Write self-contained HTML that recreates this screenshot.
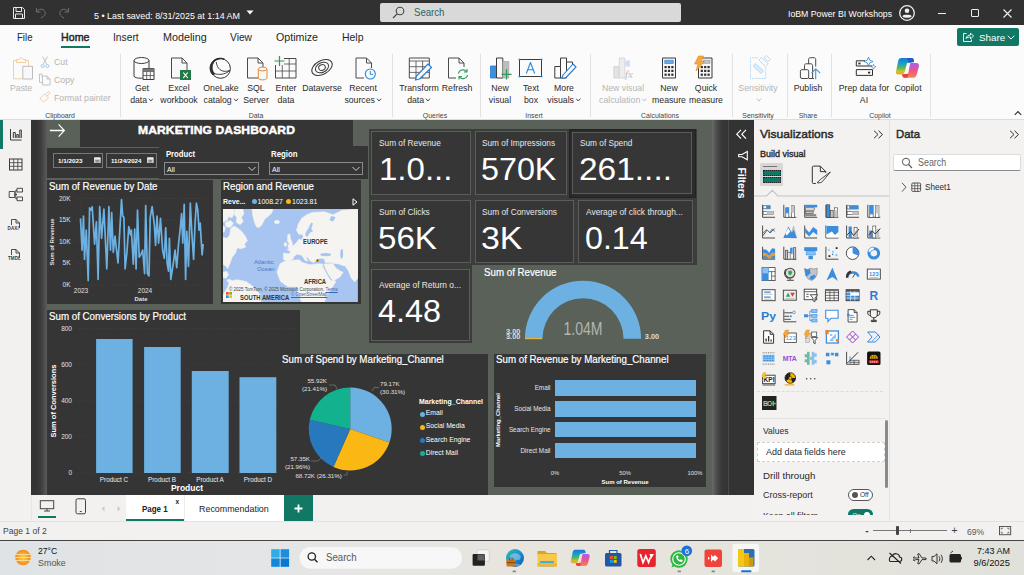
<!DOCTYPE html>
<html><head><meta charset="utf-8">
<style>
*{box-sizing:border-box;margin:0;padding:0}
html,body{width:1024px;height:575px;overflow:hidden;background:#fff;font-family:"Liberation Sans",sans-serif;}
.a{position:absolute}
.t{position:absolute;white-space:nowrap;line-height:1}
.w{color:#fff}
.dk{position:absolute;background:#353535}
.card{position:absolute;background:#363636;border:1px solid #5c5c5c}
.cl{position:absolute;white-space:nowrap;line-height:1;color:#e8e8e8;font-size:9px}
.cv{position:absolute;white-space:nowrap;line-height:1;color:#fff;font-size:31.5px}
.ax{position:absolute;white-space:nowrap;line-height:1;color:#e0e0e0;font-size:6.5px}
.ttl{position:absolute;white-space:nowrap;line-height:1;color:#fff;font-size:10.5px;-webkit-text-stroke:0.2px #fff}
.sg{transform:scaleX(.89);transform-origin:left center}
.sg.c{transform-origin:center center}
.sg.r{transform-origin:right center}
.r{text-align:right}
.c{text-align:center}
.b{font-weight:bold}
</style></head><body>
<!-- canvas surround -->
<div class="a" style="left:31px;top:120px;width:722px;height:375px;background:#333"></div>
<div class="a" style="left:31px;top:120px;width:16px;height:375px;background:linear-gradient(90deg,#333 0,#343434 35%,#3c3c3c 60%,#4b4b4b 80%,#5c5c5c 100%)"></div>
<div class="a" style="left:712px;top:120px;width:17px;height:375px;background:linear-gradient(90deg,#6a6a6a 0,#5e5e5e 12%,#484848 32%,#383838 58%,#333 100%)"></div>
<div class="a" style="left:728px;top:120px;width:1px;height:375px;background:#4a4a4a"></div>
<div class="a" style="left:47px;top:120px;width:665px;height:375px;background:#5a6158"></div>
<!-- title -->
<div class="dk" style="left:80px;top:120px;width:273px;height:27px"></div>
<div class="t w b c" style="transform:scaleX(1.050);transform-origin:center center;left:80px;top:125px;width:273px;font-size:11.5px;letter-spacing:0.1px;-webkit-text-stroke:0.45px #fff">MARKETING DASHBOARD</div>
<svg class="a" style="left:49px;top:123px" width="17.5" height="15" viewBox="0 0 20 16" preserveAspectRatio="none"><path d="M1 8H17M11 1.5L17.5 8L11 14.5" fill="none" stroke="#fff" stroke-width="1.4"/></svg>
<!-- date slicer row -->
<div class="dk" style="left:47px;top:148px;width:321px;height:30px"></div>
<div class="dk" style="left:159px;top:146px;width:209px;height:33px"></div>
<div class="a" style="left:53px;top:153px;width:50px;height:15px;border:1px solid #777"></div>
<div class="a" style="left:106px;top:153px;width:51px;height:15px;border:1px solid #777"></div>
<div class="t w b" style="transform:scaleX(1.021);transform-origin:left center;left:58px;top:157.8px;font-size:6.2px">1/1/2023</div>
<div class="t w b" style="transform:scaleX(0.995);transform-origin:left center;left:110.8px;top:157.8px;font-size:6.2px">11/24/2024</div>
<svg class="a" style="left:94.3px;top:156.5px" width="6.6" height="6.8" viewBox="0 0 8 8"><rect x="0.5" y="1" width="7" height="6.5" fill="#bbb" stroke="#ddd"/><rect x="0.5" y="0.5" width="7" height="2.2" fill="#eee"/><path d="M2 4.2H6M2 5.8H6" stroke="#666" stroke-width="0.8"/></svg>
<svg class="a" style="left:147.3px;top:156.5px" width="6.6" height="6.8" viewBox="0 0 8 8"><rect x="0.5" y="1" width="7" height="6.5" fill="#bbb" stroke="#ddd"/><rect x="0.5" y="0.5" width="7" height="2.2" fill="#eee"/><path d="M2 4.2H6M2 5.8H6" stroke="#666" stroke-width="0.8"/></svg>
<div class="t w b" style="transform:scaleX(0.903);transform-origin:left center;left:166px;top:150px;font-size:8.5px">Product</div>
<div class="t w b" style="transform:scaleX(0.920);transform-origin:left center;left:271px;top:150px;font-size:8.5px">Region</div>
<div class="a" style="left:164px;top:162px;width:95px;height:13px;border:1px solid #8a8a8a"></div>
<div class="a" style="left:269px;top:162px;width:94px;height:13px;border:1px solid #8a8a8a"></div>
<div class="t w" style="left:167px;top:165.5px;font-size:7px">All</div>
<div class="t w" style="left:272px;top:165.5px;font-size:7px">All</div>
<svg class="a" style="left:248px;top:166px" width="8" height="6" viewBox="0 0 8 6"><path d="M0.5 1L4 4.5L7.5 1" fill="none" stroke="#ddd" stroke-width="0.9"/></svg>
<svg class="a" style="left:352px;top:166px" width="8" height="6" viewBox="0 0 8 6"><path d="M0.5 1L4 4.5L7.5 1" fill="none" stroke="#ddd" stroke-width="0.9"/></svg>
<!-- line chart panel -->
<div class="dk" style="left:47px;top:180px;width:166px;height:124px"></div>
<div class="ttl" style="transform:scaleX(0.925);transform-origin:left center;left:49px;top:180.8px">Sum of Revenue by Date</div>
<div class="ax r" style="left:50px;width:20.5px;top:195.5px">20K</div>
<div class="ax r" style="left:50px;width:20.5px;top:217px">15K</div>
<div class="ax r" style="left:50px;width:20.5px;top:238.5px">10K</div>
<div class="ax r" style="left:50px;width:20.5px;top:260px">5K</div>
<div class="ax r" style="left:50px;width:20.5px;top:282px">0K</div>
<div class="ax c" style="left:71px;width:20px;top:288px">2023</div>
<div class="ax c" style="left:135px;width:20px;top:288px">2024</div>
<div class="ax c b" style="left:131px;width:20px;top:295.5px;font-size:6px">Date</div>
<div class="ax b" style="left:52px;top:242px;font-size:6px;transform:translate(-50%,-50%) rotate(-90deg);transform-origin:center;">Sum of Revenue</div>
<!-- map panel -->
<div class="dk" style="left:221px;top:180px;width:140px;height:124px"></div>
<div class="ttl" style="transform:scaleX(0.922);transform-origin:left center;left:223px;top:180.8px">Region and Revenue</div>
<div class="t w b" style="left:223px;top:198px;font-size:7px">Reve...</div>
<div class="a" style="left:251.5px;top:199px;width:5px;height:5px;border-radius:3px;background:#6cb1e1"></div>
<div class="t w" style="left:257.5px;top:198px;font-size:7px">1008.27</div>
<div class="a" style="left:286px;top:199px;width:5px;height:5px;border-radius:3px;background:#fbb714"></div>
<div class="t w" style="left:292px;top:198px;font-size:7px">1023.81</div>
<svg class="a" style="left:352px;top:198px" width="6" height="8" viewBox="0 0 6 8"><path d="M1 0.8L5 4L1 7.2Z" fill="none" stroke="#fff" stroke-width="1"/></svg>
<svg class="a" style="left:223.1px;top:208.8px" width="134.9" height="93.3" viewBox="18 22 775 536" preserveAspectRatio="none">
<rect x="18" y="22" width="775" height="536" fill="#a7c5f0"/>
<g fill="#f5f4f0" stroke="#f5f4f0" stroke-width="3" stroke-linejoin="round">
<!-- arctic canada -->
<path d="M18 22H78L82 48L70 72L50 66L42 88L18 95Z"/>
<path d="M84 24L132 22L138 50L124 70L134 95L116 112L94 98L98 72L84 56Z"/>
<path d="M30 100L62 88L78 105L60 128L35 124Z"/><path d="M18 120L30 125L28 150L18 155Z"/>
<!-- quebec/labrador + US -->
<path d="M62 135L80 120L100 130L125 150L150 185L158 205L140 225L150 240L120 250L100 245L90 275L70 300L60 330L45 365L35 350L18 340V185L40 190L55 175Z"/>
<path d="M18 385L40 380L50 400L35 420L18 415Z"/>
<path d="M40 430L60 425L70 440L50 445Z"/>
<!-- greenland -->
<path d="M185 22H305L298 45L280 62L258 80L240 115L222 130L208 122L198 95L188 55Z"/>
<ellipse cx="328" cy="97" rx="15" ry="10"/>
<!-- UK/Ireland -->
<path d="M390 170L402 165L405 190L415 215L420 240L398 250L390 238L398 222L388 205Z"/>
<ellipse cx="377" cy="225" rx="8" ry="11"/>
<!-- Eurasia -->
<path d="M470 75L500 55L530 42L600 38L650 55L700 30L793 22V420L775 440L755 420L740 380L720 350L700 345L690 340L660 335L640 330L605 330L600 308L575 305L555 312L540 330L520 322L505 300L495 298L505 322L490 318L470 288L445 282L425 295L420 310L390 322L365 312L366 275L398 280L405 265L385 255L410 245L440 215L455 195L470 200L480 180L470 165L455 168L440 145L450 110Z"/>
<!-- Africa -->
<path d="M345 337L372 322L420 316L455 314L475 330L520 342L560 336L590 338L612 385L640 432L668 438L640 480L615 520L600 558H470L448 505L442 468L390 468L348 438L328 385Z"/>
<!-- Arabia -->
<path d="M598 338L650 335L668 362L708 385L690 412L648 438L625 405L605 365Z"/>
<!-- South America -->
<path d="M58 435L100 428L150 438L192 468L232 515L235 558H18V515L45 470Z"/>
</g>
<g fill="#a7c5f0">
<ellipse cx="608" cy="284" rx="32" ry="9"/>
<ellipse cx="700" cy="280" rx="8" ry="28"/>
<path d="M492 160L510 130L525 100L535 105L525 135L535 150L515 160L505 180L492 178Z"/>
<path d="M640 62L665 70L650 95L630 85Z"/>
<path d="M592 345L618 395L642 432" fill="none" stroke="#a7c5f0" stroke-width="6"/><path d="M658 342L682 362L700 378" fill="none" stroke="#a7c5f0" stroke-width="9"/>
</g>
</svg>
<div class="t b" style="left:302.5px;top:239px;font-size:6.5px;color:#333;transform:scaleX(0.9);transform-origin:left">EUROPE</div>
<div class="t b" style="left:304px;top:278.5px;font-size:6.5px;color:#333;transform:scaleX(0.9);transform-origin:left">AFRICA</div>
<div class="t b" style="left:240px;top:295px;font-size:6.5px;color:#333;transform:scaleX(0.9);transform-origin:left">SOUTH AMERICA</div>
<div class="t" style="left:254px;top:259px;font-size:6px;color:#4a78c0">Atlantic</div>
<div class="t" style="left:257px;top:266px;font-size:6px;color:#4a78c0">Ocean</div>
<div class="t" style="left:229px;top:288px;font-size:4.5px;color:#444">© 2025 TomTom, © 2025 Microsoft Corporation, <span style="color:#3a66b0;text-decoration:underline">Terms</span></div>
<div class="t" style="left:291px;top:293px;font-size:4.5px;color:#3a66b0;text-decoration:underline">© OpenStreetMap</div>
<div class="a" style="left:316px;top:258.5px;width:3px;height:3px;border-radius:2px;background:#333;border:0.7px solid #c9a020"></div>
<svg class="a" style="left:225.5px;top:292px" width="6" height="6" viewBox="0 0 6 6"><rect width="2.7" height="2.7" fill="#f25022"/><rect x="3.3" width="2.7" height="2.7" fill="#7fba00"/><rect y="3.3" width="2.7" height="2.7" fill="#00a4ef"/><rect x="3.3" y="3.3" width="2.7" height="2.7" fill="#ffb900"/></svg>

<!-- cards -->
<div class="a" style="left:369px;top:129px;width:328px;height:136px;background:#3b3d3b"></div>
<div class="a" style="left:369px;top:265px;width:103px;height:78px;background:#3b3d3b"></div>
<div class="card" style="left:371px;top:131px;width:100px;height:64px"></div>
<div class="card" style="left:475px;top:131px;width:92px;height:64px"></div>
<div class="a" style="left:569px;top:129px;width:127px;height:69px;background:#2b2b2b;border:1px solid #222"></div>
<div class="card" style="left:572px;top:132px;width:120px;height:62px"></div>
<div class="card" style="left:371px;top:200px;width:100px;height:63px"></div>
<div class="card" style="left:475px;top:200px;width:99px;height:63px"></div>
<div class="card" style="left:578px;top:200px;width:115px;height:63px"></div>
<div class="card" style="left:371px;top:269px;width:99px;height:72px"></div>
<div class="cl" style="transform:scaleX(0.922);transform-origin:left center;left:378.5px;top:139px">Sum of Revenue</div>
<div class="cl" style="transform:scaleX(0.918);transform-origin:left center;left:482px;top:139px">Sum of Impressions</div>
<div class="cl" style="transform:scaleX(0.919);transform-origin:left center;left:579.5px;top:139px">Sum of Spend</div>
<div class="cl" style="transform:scaleX(0.923);transform-origin:left center;left:378.5px;top:208px">Sum of Clicks</div>
<div class="cl" style="transform:scaleX(0.925);transform-origin:left center;left:482px;top:208px">Sum of Conversions</div>
<div class="cl" style="transform:scaleX(0.932);transform-origin:left center;left:585.5px;top:208px">Average of click through...</div>
<div class="cl" style="transform:scaleX(0.933);transform-origin:left center;left:378.5px;top:280.5px">Average of Return o...</div>
<div class="cv" style="transform:scaleX(1.048);transform-origin:left center;left:378.5px;top:154px">1.0...</div>
<div class="cv" style="transform:scaleX(1.025);transform-origin:left center;left:481px;top:154px">570K</div>
<div class="cv" style="transform:scaleX(1.062);transform-origin:left center;left:578.5px;top:154px">261....</div>
<div class="cv" style="transform:scaleX(1.052);transform-origin:left center;left:377.5px;top:223px">56K</div>
<div class="cv" style="transform:scaleX(1.074);transform-origin:left center;left:481px;top:223px">3K</div>
<div class="cv" style="transform:scaleX(1.023);transform-origin:left center;left:584.5px;top:223px">0.14</div>
<div class="cv" style="transform:scaleX(1.028);transform-origin:left center;left:377.5px;top:296px">4.48</div>
<!-- gauge -->
<div class="ttl" style="transform:scaleX(0.927);transform-origin:left center;left:484px;top:267px">Sum of Revenue</div>
<svg class="a" style="left:500px;top:275px" width="180" height="70" viewBox="500 275 180 70">
<path d="M524.9 338.7A58.1 58.1 0 0 1 641.1 338.7L623.5 338.7A40.5 40.5 0 0 0 542.5 338.7Z" fill="#6cb1e1"/>
<rect x="525" y="338" width="17" height="1.2" fill="#e8b33a"/>
</svg>
<div class="t c" style="left:553px;width:60px;top:320px;font-size:18px;color:#b4b4b4;transform:scaleX(0.78)">1.04M</div>
<div class="ax b" style="left:506px;top:328px;font-size:7.4px;color:#ddd">3.00</div>
<div class="ax b" style="left:506px;top:332.8px;font-size:7.4px;color:#ddd">3.00</div>
<div class="ax b" style="left:644.8px;top:332.8px;font-size:7.4px;color:#ddd">3.00</div>
<!-- conversions by product -->
<div class="dk" style="left:47px;top:310px;width:253px;height:185px"></div>
<div class="ttl" style="transform:scaleX(0.928);transform-origin:left center;left:49px;top:311px">Sum of Conversions by Product</div>
<div class="ax r" style="left:50px;width:22px;top:325.5px">800</div>
<div class="ax r" style="left:50px;width:22px;top:361.5px">600</div>
<div class="ax r" style="left:50px;width:22px;top:398px">400</div>
<div class="ax r" style="left:50px;width:22px;top:433.5px">200</div>
<div class="ax r" style="left:50px;width:22px;top:470px">0</div>
<div class="ax b" style="left:53.5px;top:401px;font-size:7.5px;color:#fff;transform:translate(-50%,-50%) rotate(-90deg)">Sum of Conversions</div>
<div class="ax c" style="left:94px;width:40px;top:476.5px;font-size:6.4px;color:#eee">Product C</div>
<div class="ax c" style="left:142px;width:40px;top:476.5px;font-size:6.4px;color:#eee">Product B</div>
<div class="ax c" style="left:190px;width:40px;top:476.5px;font-size:6.4px;color:#eee">Product A</div>
<div class="ax c" style="left:238px;width:40px;top:476.5px;font-size:6.4px;color:#eee">Product D</div>
<div class="ax c b" style="left:157px;width:60px;top:483.5px;font-size:8.5px;color:#fff">Product</div>
<svg class="a" style="left:0;top:0" width="1024" height="575" viewBox="0 0 1024 575">
<line x1="76" x2="206" y1="198.5" y2="198.5" stroke="#4a4a4a" stroke-width="0.6" stroke-dasharray="1 2"/>
<line x1="76" x2="206" y1="220.0" y2="220.0" stroke="#4a4a4a" stroke-width="0.6" stroke-dasharray="1 2"/>
<line x1="76" x2="206" y1="241.6" y2="241.6" stroke="#4a4a4a" stroke-width="0.6" stroke-dasharray="1 2"/>
<line x1="76" x2="206" y1="263.0" y2="263.0" stroke="#4a4a4a" stroke-width="0.6" stroke-dasharray="1 2"/>
<line x1="76" x2="206" y1="285.0" y2="285.0" stroke="#4a4a4a" stroke-width="0.6" stroke-dasharray="1 2"/>
<line x1="81.0" x2="81.0" y1="197" y2="286" stroke="#4a4a4a" stroke-width="0.6" stroke-dasharray="1 2"/>
<line x1="145.0" x2="145.0" y1="197" y2="286" stroke="#4a4a4a" stroke-width="0.6" stroke-dasharray="1 2"/>
<polyline points="80.5,218.4 82.1,250.1 83.5,216.1 84.5,259.5 86.3,230.2 88.2,280.6 89.6,207.9 91.0,210.2 92.2,206.7 94.6,244.2 96.4,221.9 98.1,279.5 99.7,206.7 101.6,238.4 103.9,209.0 106.8,268.9 108.9,206.7 110.5,250.1 111.7,212.6 113.3,252.5 115.0,236.0 118.0,263.0 121.5,199.6 122.7,216.1 123.9,217.3 125.1,268.9 126.9,252.5 128.8,226.6 130.5,234.9 131.4,230.2 133.3,264.2 134.7,229.0 136.1,268.9 137.5,210.2 139.2,257.2 140.8,254.8 142.7,250.1 144.6,273.6 145.7,205.5 147.4,273.6 149.0,275.9 150.2,217.3 152.1,206.7 154.4,225.5 155.6,245.4 157.0,216.1 158.6,243.1 160.5,218.4 162.6,250.1 164.3,258.3 165.7,227.8 167.1,263.0 168.5,271.2 169.4,238.4 170.8,279.5 173.2,264.2 175.1,250.1 176.7,267.7 178.4,245.4 180.2,229.0 181.6,213.7 182.8,243.1 184.2,204.3 185.6,279.5 186.8,231.3 188.5,266.5 190.3,203.2 192.0,236.0 193.6,259.5 195.0,224.3 196.4,203.2 197.8,210.2 199.0,230.2 200.2,223.1 202.1,254.8 203.2,244.2" fill="none" stroke="#6cb1e1" stroke-width="1.7" stroke-linejoin="round"/>
<line x1="78" x2="297" y1="328.5" y2="328.5" stroke="#484848" stroke-width="0.6" stroke-dasharray="1 2"/>
<line x1="78" x2="297" y1="364.4" y2="364.4" stroke="#484848" stroke-width="0.6" stroke-dasharray="1 2"/>
<line x1="78" x2="297" y1="400.9" y2="400.9" stroke="#484848" stroke-width="0.6" stroke-dasharray="1 2"/>
<line x1="78" x2="297" y1="436.7" y2="436.7" stroke="#484848" stroke-width="0.6" stroke-dasharray="1 2"/>
<line x1="78" x2="297" y1="473.0" y2="473.0" stroke="#484848" stroke-width="0.6" stroke-dasharray="1 2"/>
<rect x="96.1" y="339.0" width="36.5" height="134.0" fill="#6cb1e1"/>
<rect x="144.1" y="347.0" width="36.6" height="126.0" fill="#6cb1e1"/>
<rect x="191.8" y="371.0" width="36.9" height="102.0" fill="#6cb1e1"/>
<rect x="239.5" y="377.2" width="36.8" height="95.8" fill="#6cb1e1"/>
</svg>
<!-- pie panel -->
<div class="dk" style="left:277px;top:354px;width:211px;height:141px"></div>
<div class="ttl" style="transform:scaleX(0.927);transform-origin:left center;left:281.5px;top:353.7px">Sum of Spend by Marketing_Channel</div>
<svg class="a" style="left:277px;top:354px" width="211" height="141" viewBox="277 354 211 141">
<path d="M350.20 429.00L350.20 387.50A41.50 41.50 0 0 1 389.41 442.59Z" fill="#6cb1e1"/>
<path d="M350.20 429.00L389.41 442.59A41.50 41.50 0 0 1 333.43 466.96Z" fill="#fbb714"/>
<path d="M350.20 429.00L333.43 466.96A41.50 41.50 0 0 1 309.75 419.74Z" fill="#2878bd"/>
<path d="M350.20 429.00L309.75 419.74A41.50 41.50 0 0 1 350.17 387.50Z" fill="#12b28f"/>
<path d="M372 391L374 387.5L379 387.5M337 389L335 385L329 385M322 457L318 461L311 461M347 471.5L347 475L343.5 475" fill="none" stroke="#888" stroke-width="0.6"/>
</svg>
<div class="ax" style="left:380px;top:381px;font-size:6.2px">79.17K</div>
<div class="ax" style="left:380px;top:389px;font-size:6.2px">(30.31%)</div>
<div class="ax r" style="left:287px;width:40px;top:378px;font-size:6.2px">55.92K</div>
<div class="ax r" style="left:287px;width:40px;top:386px;font-size:6.2px">(21.41%)</div>
<div class="ax r" style="left:270px;width:40px;top:456px;font-size:6.2px">57.35K</div>
<div class="ax r" style="left:270px;width:40px;top:464px;font-size:6.2px">(21.96%)</div>
<div class="ax" style="left:295.4px;top:472.5px;font-size:6.2px">68.72K (26.31%)</div>
<div class="ax b" style="transform:scaleX(1.021);transform-origin:left center;left:419px;top:399.3px;font-size:6.8px;color:#fff">Marketing_Channel</div>
<div class="a" style="left:420px;top:411.7px;width:5px;height:5px;border-radius:3px;background:#6cb1e1"></div>
<div class="ax" style="left:425.8px;top:410.3px;font-size:6.8px;color:#fff">Email</div>
<div class="a" style="left:420px;top:424.8px;width:5px;height:5px;border-radius:3px;background:#fbb714"></div>
<div class="ax" style="left:425.8px;top:423.4px;font-size:6.8px;color:#fff">Social Media</div>
<div class="a" style="left:420px;top:437.9px;width:5px;height:5px;border-radius:3px;background:#2878bd"></div>
<div class="ax" style="left:425.8px;top:436.5px;font-size:6.8px;color:#fff">Search Engine</div>
<div class="a" style="left:420px;top:450.9px;width:5px;height:5px;border-radius:3px;background:#12b28f"></div>
<div class="ax" style="left:425.8px;top:449.5px;font-size:6.8px;color:#fff">Direct Mail</div>
<!-- bar panel -->
<div class="dk" style="left:493.5px;top:353.5px;width:212.5px;height:133px"></div>
<div class="ttl" style="transform:scaleX(0.927);transform-origin:left center;left:496px;top:354px">Sum of Revenue by Marketing_Channel</div>
<div class="a" style="left:555px;top:380px;width:140.5px;height:15.7px;background:#6cb1e1"></div>
<div class="a" style="left:555px;top:400.8px;width:140.5px;height:15.9px;background:#6cb1e1"></div>
<div class="a" style="left:555px;top:421.9px;width:140.5px;height:15.6px;background:#6cb1e1"></div>
<div class="a" style="left:555px;top:442.6px;width:140.5px;height:15.7px;background:#6cb1e1"></div>
<div class="ax r" style="left:500px;width:50.5px;top:385px;font-size:6.35px;color:#e6e6e6">Email</div>
<div class="ax r" style="left:500px;width:50.5px;top:405.5px;font-size:6.35px;color:#e6e6e6">Social Media</div>
<div class="ax r" style="left:500px;width:50.5px;top:426.5px;font-size:6.35px;color:#e6e6e6">Search Engine</div>
<div class="ax r" style="left:500px;width:50.5px;top:447.5px;font-size:6.35px;color:#e6e6e6">Direct Mail</div>
<div class="ax c" style="left:545px;width:20px;top:471px;font-size:5.8px">0%</div>
<div class="ax c" style="left:615px;width:20px;top:471px;font-size:5.8px">50%</div>
<div class="ax c" style="left:685px;width:20px;top:471px;font-size:5.8px">100%</div>
<div class="ax c b" style="left:595px;width:60px;top:478.6px;font-size:6px;color:#fff">Sum of Revenue</div>
<div class="ax b" style="left:499px;top:420px;font-size:5.85px;color:#fff;transform:translate(-50%,-50%) rotate(-90deg)">Marketing_Channel</div>
<div class="a" style="left:0;top:0;width:1024px;height:25px;background:#313131"></div>
<div class="a" style="left:0;top:25px;width:1024px;height:95px;background:#fbfbfb"></div>
<div class="a" style="left:0;top:119px;width:1024px;height:1px;background:#dcdcdc"></div>
<svg class="a" style="left:12px;top:6px" width="14" height="14" viewBox="0 0 14 14"><path d="M1.5 1.5H10.5L12.5 3.5V12.5H1.5Z M4 1.5V5.5H9.5V1.5 M3.5 12.5V8H10.5V12.5" fill="none" stroke="#e8e8e8" stroke-width="1"/></svg>
<svg class="a" style="left:35px;top:7px" width="12" height="12" viewBox="0 0 12 12"><path d="M1.5 1V5H5.5 M1.8 4.8C3 2.5 5.5 1.5 8 2.7C10.8 4.3 10.8 7.6 8.5 9.4L6 11" fill="none" stroke="#6e6e6e" stroke-width="1"/></svg>
<svg class="a" style="left:58px;top:7px" width="12" height="12" viewBox="0 0 12 12"><path d="M10.5 1V5H6.5 M10.2 4.8C9 2.5 6.5 1.5 4 2.7C1.2 4.3 1.2 7.6 3.5 9.4L6 11" fill="none" stroke="#6e6e6e" stroke-width="1"/></svg>
<div class="t w" style="transform:scaleX(0.930);transform-origin:left center;left:94px;top:10.5px;font-size:9.6px">5 • Last saved: 8/31/2025 at 1:14 AM</div>
<svg class="a" style="left:246px;top:10px" width="8" height="5" viewBox="0 0 8 5"><path d="M0.5 0.5H7.5L4 4.5Z" fill="#fff"/></svg>
<div class="a" style="left:379.7px;top:3px;width:301px;height:19px;background:#d9d9d9;border-radius:2px"></div>
<svg class="a" style="left:392px;top:6px" width="13" height="13" viewBox="0 0 13 13"><circle cx="8" cy="5" r="3.8" fill="none" stroke="#444" stroke-width="1.1"/><path d="M5.2 7.8L1 12" stroke="#444" stroke-width="1.2"/></svg>
<div class="t" style="transform:scaleX(0.934);transform-origin:left center;left:414px;top:8px;font-size:10.3px;color:#2e655e">Search</div>
<div class="t w" style="transform:scaleX(0.909);transform-origin:left center;left:788px;top:9px;font-size:9.6px">IoBM Power BI Workshops</div>
<svg class="a" style="left:898px;top:4px" width="18" height="18" viewBox="0 0 18 18"><circle cx="9" cy="9" r="7.3" fill="none" stroke="#f0f0f0" stroke-width="1.3"/><circle cx="9" cy="6.8" r="2.3" fill="#f0f0f0"/><path d="M4.3 12.2C5 10.3 13 10.3 13.7 12.2C12.5 14.3 5.5 14.3 4.3 12.2Z" fill="#f0f0f0"/></svg>
<div class="a" style="left:938px;top:13px;width:8px;height:1px;background:#eee"></div>
<div class="a" style="left:971px;top:9px;width:8px;height:8px;border:1px solid #eee;border-radius:1px"></div>
<svg class="a" style="left:1003px;top:9px" width="9" height="9" viewBox="0 0 9 9"><path d="M0.5 0.5L8.5 8.5M8.5 0.5L0.5 8.5" stroke="#eee" stroke-width="1.1"/></svg>
<div class="t" style="transform:scaleX(0.890);transform-origin:left center;left:17px;top:32px;font-size:10.8px;color:#252525">File</div>
<div class="t" style="transform:scaleX(0.989);transform-origin:left center;left:61px;top:32px;font-size:10.8px;color:#252525;-webkit-text-stroke:0.45px #252525">Home</div>
<div class="t" style="transform:scaleX(0.951);transform-origin:left center;left:113px;top:32px;font-size:10.8px;color:#252525">Insert</div>
<div class="t" style="transform:scaleX(0.997);transform-origin:left center;left:163px;top:32px;font-size:10.8px;color:#252525">Modeling</div>
<div class="t" style="transform:scaleX(0.948);transform-origin:left center;left:230px;top:32px;font-size:10.8px;color:#252525">View</div>
<div class="t" style="transform:scaleX(0.986);transform-origin:left center;left:276px;top:32px;font-size:10.8px;color:#252525">Optimize</div>
<div class="t" style="transform:scaleX(0.968);transform-origin:left center;left:342px;top:32px;font-size:10.8px;color:#252525">Help</div>
<div class="a" style="left:61px;top:46px;width:29px;height:2px;background:#117865"></div>
<div class="a" style="left:957px;top:28px;width:62px;height:18px;background:#117865;border-radius:2px"></div>
<svg class="a" style="left:962px;top:31px" width="12" height="12" viewBox="0 0 12 12"><path d="M4.5 2.5H1.5V10.5H9.5V8.5 M4 7.5C4.5 5 6.5 4 8.5 4V2L11.5 5L8.5 8V6C6.8 6 5 6.3 4 7.5Z" fill="none" stroke="#fff" stroke-width="0.9"/></svg>
<div class="t w" style="left:979px;top:32.5px;font-size:9.8px">Share</div>
<svg class="a" style="left:1007px;top:35px" width="8" height="5" viewBox="0 0 8 5"><path d="M0.7 0.7L4 4L7.3 0.7" fill="none" stroke="#fff" stroke-width="1"/></svg>
<div class="a" style="left:120.0px;top:54px;width:1px;height:63px;background:#e2e2e2"></div>
<div class="a" style="left:392.0px;top:54px;width:1px;height:63px;background:#e2e2e2"></div>
<div class="a" style="left:480.0px;top:54px;width:1px;height:63px;background:#e2e2e2"></div>
<div class="a" style="left:590.0px;top:54px;width:1px;height:63px;background:#e2e2e2"></div>
<div class="a" style="left:731.5px;top:54px;width:1px;height:63px;background:#e2e2e2"></div>
<div class="a" style="left:786.5px;top:54px;width:1px;height:63px;background:#e2e2e2"></div>
<div class="a" style="left:830.5px;top:54px;width:1px;height:63px;background:#e2e2e2"></div>
<div class="a" style="left:929.5px;top:54px;width:1px;height:63px;background:#e2e2e2"></div>
<div class="t c sg" style="left:20px;width:80px;top:111.5px;font-size:7.8px;color:#444">Clipboard</div>
<div class="t c sg" style="left:216px;width:80px;top:111.5px;font-size:7.8px;color:#444">Data</div>
<div class="t c sg" style="left:395px;width:80px;top:111.5px;font-size:7.8px;color:#444">Queries</div>
<div class="t c sg" style="left:494px;width:80px;top:111.5px;font-size:7.8px;color:#444">Insert</div>
<div class="t c sg" style="left:620px;width:80px;top:111.5px;font-size:7.8px;color:#444">Calculations</div>
<div class="t c sg" style="left:718px;width:80px;top:111.5px;font-size:7.8px;color:#444">Sensitivity</div>
<div class="t c sg" style="left:768px;width:80px;top:111.5px;font-size:7.8px;color:#444">Share</div>
<div class="t c sg" style="left:840px;width:80px;top:111.5px;font-size:7.8px;color:#444">Copilot</div>
<div class="t c sg" style="left:92.0px;width:100px;top:83.3px;font-size:9.8px;color:#2b2b2b">Get</div>
<div class="t c sg" style="left:92.0px;width:100px;top:95.3px;font-size:9.8px;color:#2b2b2b">data<svg width="6" height="4" viewBox="0 0 6 4" style="margin-left:1.5px;vertical-align:1px"><path d="M0.6 0.6L3 3L5.4 0.6" fill="none" stroke="#2b2b2b" stroke-width="0.9"/></svg></div>
<div class="t c sg" style="left:128.8px;width:100px;top:83.3px;font-size:9.8px;color:#2b2b2b">Excel</div>
<div class="t c sg" style="left:128.8px;width:100px;top:95.3px;font-size:9.8px;color:#2b2b2b">workbook</div>
<div class="t c sg" style="left:170.6px;width:100px;top:83.3px;font-size:9.8px;color:#2b2b2b">OneLake</div>
<div class="t c sg" style="left:170.6px;width:100px;top:95.3px;font-size:9.8px;color:#2b2b2b">catalog<svg width="6" height="4" viewBox="0 0 6 4" style="margin-left:1.5px;vertical-align:1px"><path d="M0.6 0.6L3 3L5.4 0.6" fill="none" stroke="#2b2b2b" stroke-width="0.9"/></svg></div>
<div class="t c sg" style="left:206.0px;width:100px;top:83.3px;font-size:9.8px;color:#2b2b2b">SQL</div>
<div class="t c sg" style="left:206.0px;width:100px;top:95.3px;font-size:9.8px;color:#2b2b2b">Server</div>
<div class="t c sg" style="left:236.0px;width:100px;top:83.3px;font-size:9.8px;color:#2b2b2b">Enter</div>
<div class="t c sg" style="left:236.0px;width:100px;top:95.3px;font-size:9.8px;color:#2b2b2b">data</div>
<div class="t c sg" style="left:271.8px;width:100px;top:83.3px;font-size:9.8px;color:#2b2b2b">Dataverse</div>
<div class="t c sg" style="left:313.4px;width:100px;top:83.3px;font-size:9.8px;color:#2b2b2b">Recent</div>
<div class="t c sg" style="left:313.4px;width:100px;top:95.3px;font-size:9.8px;color:#2b2b2b">sources<svg width="6" height="4" viewBox="0 0 6 4" style="margin-left:1.5px;vertical-align:1px"><path d="M0.6 0.6L3 3L5.4 0.6" fill="none" stroke="#2b2b2b" stroke-width="0.9"/></svg></div>
<div class="t c sg" style="left:369.0px;width:100px;top:83.3px;font-size:9.8px;color:#2b2b2b">Transform</div>
<div class="t c sg" style="left:369.0px;width:100px;top:95.3px;font-size:9.8px;color:#2b2b2b">data<svg width="6" height="4" viewBox="0 0 6 4" style="margin-left:1.5px;vertical-align:1px"><path d="M0.6 0.6L3 3L5.4 0.6" fill="none" stroke="#2b2b2b" stroke-width="0.9"/></svg></div>
<div class="t c sg" style="left:406.6px;width:100px;top:83.3px;font-size:9.8px;color:#2b2b2b">Refresh</div>
<div class="t c sg" style="left:450.4px;width:100px;top:83.3px;font-size:9.8px;color:#2b2b2b">New</div>
<div class="t c sg" style="left:450.4px;width:100px;top:95.3px;font-size:9.8px;color:#2b2b2b">visual</div>
<div class="t c sg" style="left:480.5px;width:100px;top:83.3px;font-size:9.8px;color:#2b2b2b">Text</div>
<div class="t c sg" style="left:480.5px;width:100px;top:95.3px;font-size:9.8px;color:#2b2b2b">box</div>
<div class="t c sg" style="left:513.6px;width:100px;top:83.3px;font-size:9.8px;color:#2b2b2b">More</div>
<div class="t c sg" style="left:513.6px;width:100px;top:95.3px;font-size:9.8px;color:#2b2b2b">visuals<svg width="6" height="4" viewBox="0 0 6 4" style="margin-left:1.5px;vertical-align:1px"><path d="M0.6 0.6L3 3L5.4 0.6" fill="none" stroke="#2b2b2b" stroke-width="0.9"/></svg></div>
<div class="t c sg" style="left:573.4px;width:100px;top:83.3px;font-size:9.8px;color:#b5b5b5">New visual</div>
<div class="t c sg" style="left:573.4px;width:100px;top:95.3px;font-size:9.8px;color:#b5b5b5">calculation<svg width="6" height="4" viewBox="0 0 6 4" style="margin-left:1.5px;vertical-align:1px"><path d="M0.6 0.6L3 3L5.4 0.6" fill="none" stroke="#b5b5b5" stroke-width="0.9"/></svg></div>
<div class="t c sg" style="left:619.2px;width:100px;top:83.3px;font-size:9.8px;color:#2b2b2b">New</div>
<div class="t c sg" style="left:619.2px;width:100px;top:95.3px;font-size:9.8px;color:#2b2b2b">measure</div>
<div class="t c sg" style="left:656.1px;width:100px;top:83.3px;font-size:9.8px;color:#2b2b2b">Quick</div>
<div class="t c sg" style="left:656.1px;width:100px;top:95.3px;font-size:9.8px;color:#2b2b2b">measure</div>
<div class="t c sg" style="left:708.0px;width:100px;top:83.3px;font-size:9.8px;color:#b5b5b5">Sensitivity</div>
<div class="t c sg" style="left:708.0px;width:100px;top:95.3px;font-size:9.8px;color:#b5b5b5"><svg width="6" height="4" viewBox="0 0 6 4" style="margin-left:1.5px;vertical-align:1px"><path d="M0.6 0.6L3 3L5.4 0.6" fill="none" stroke="#b5b5b5" stroke-width="0.9"/></svg></div>
<div class="t c sg" style="left:758.4px;width:100px;top:83.3px;font-size:9.8px;color:#2b2b2b">Publish</div>
<div class="t c sg" style="left:814.4px;width:100px;top:83.3px;font-size:9.8px;color:#2b2b2b">Prep data for</div>
<div class="t c sg" style="left:814.4px;width:100px;top:95.3px;font-size:9.8px;color:#2b2b2b">AI</div>
<div class="t c sg" style="left:858.0px;width:100px;top:83.3px;font-size:9.8px;color:#2b2b2b">Copilot</div>
<div class="t sg" style="left:10px;top:83.3px;font-size:9.8px;color:#b5b5b5">Paste</div>
<div class="t sg" style="left:54px;top:57px;font-size:9.8px;color:#b5b5b5">Cut</div>
<div class="t sg" style="left:54px;top:75px;font-size:9.8px;color:#b5b5b5">Copy</div>
<div class="t sg" style="left:54px;top:93px;font-size:9.8px;color:#b5b5b5">Format painter</div>
<svg class="a" style="left:1013.5px;top:110px" width="8" height="6" viewBox="0 0 8 6"><path d="M0.8 4.8L4 1.5L7.2 4.8" fill="none" stroke="#333" stroke-width="1.2"/></svg>
<svg class="a" style="left:0;top:50px" width="1024" height="70" viewBox="0 50 1024 70" fill="none" stroke-linejoin="round">
<defs>
<linearGradient id="cp1" x1="0" y1="0" x2="1" y2="1"><stop offset="0" stop-color="#2a9df4"/><stop offset="0.35" stop-color="#3fc08c"/><stop offset="0.6" stop-color="#f5c04a"/><stop offset="1" stop-color="#f0603a"/></linearGradient>
<linearGradient id="cp2" x1="0" y1="0" x2="1" y2="1"><stop offset="0" stop-color="#3a6ff0"/><stop offset="0.5" stop-color="#b05ae0"/><stop offset="1" stop-color="#f0508a"/></linearGradient>
<linearGradient id="cpL" x1="0" y1="0" x2="0" y2="1"><stop offset="0" stop-color="#1878d8"/><stop offset="0.35" stop-color="#1aa0c8"/><stop offset="0.6" stop-color="#58b858"/><stop offset="0.8" stop-color="#c8c030"/><stop offset="1" stop-color="#f0a818"/></linearGradient><linearGradient id="cpR" x1="0" y1="0" x2="0" y2="1"><stop offset="0" stop-color="#a860e8"/><stop offset="0.45" stop-color="#e85498"/><stop offset="0.75" stop-color="#f06a6a"/><stop offset="1" stop-color="#e8924a"/></linearGradient></defs>
<!-- paste -->
<path d="M16.5 60.5H13.5V78.8H22.5 M28.5 66V60.5H25.5 M16.5 62.5V59.5H19C19 57.3 23 57.3 23 59.5H25.5V62.5Z" stroke="#f2cfa0" stroke-width="1"/>
<rect x="22.8" y="66.3" width="9.7" height="12.7" stroke="#bdbdbd" stroke-width="1" fill="#f8f8f8"/>
<!-- cut -->
<path d="M42.5 56.5L47 64.5 M47.5 56.5L43 64.5" stroke="#bdbdbd" stroke-width="0.9"/>
<circle cx="42.7" cy="66" r="1.5" stroke="#9cc7ea" stroke-width="0.9"/><circle cx="47.3" cy="66" r="1.5" stroke="#9cc7ea" stroke-width="0.9"/>
<!-- copy -->
<path d="M42 76.5V74H39.5V82.5H42" stroke="#bdbdbd" stroke-width="0.9"/>
<path d="M42.5 76H47L50 79V85H42.5Z M47 76V79H50" stroke="#bdbdbd" stroke-width="0.9"/>
<!-- format painter -->
<path d="M39.8 98.5L44.5 94L48.5 98L43.5 102Z M45.5 94.5L48.5 91.5L50 93L47 96" stroke="#f2cfa0" stroke-width="1"/>
<!-- get data -->
<path d="M134 60.5V76C134 79 148.5 79 149 76 M149 60.5V68" stroke="#3b3b3b" stroke-width="1"/>
<ellipse cx="141.5" cy="60.5" rx="7.5" ry="3" stroke="#3b3b3b" stroke-width="1"/>
<rect x="143" y="68.5" width="11" height="11" fill="#f8f8f8" stroke="#3b3b3b" stroke-width="1"/>
<path d="M143 71.5H154 M143 75.5H154 M146.7 71.5V79.5 M150.3 71.5V79.5" stroke="#3b3b3b" stroke-width="0.7"/>
<rect x="143" y="68.5" width="11" height="3" fill="#777" stroke="none"/>
<!-- excel -->
<path d="M171.5 58H182L187 63V78H171.5Z M182 58V63H187" stroke="#4a4a4a" stroke-width="1" fill="#f8f8f8"/>
<rect x="180" y="70" width="11" height="10" fill="#1e7b45" stroke="none"/>
<path d="M183.3 72.5L187.7 77.8 M187.7 72.5L183.3 77.8" stroke="#fff" stroke-width="1.1"/>
<!-- onelake -->
<circle cx="220.6" cy="68.5" r="9.8" stroke="#2f2f2f" stroke-width="1"/>
<path d="M212.3 74.5A10 10 0 0 1 224.5 59.2A9 9 0 0 0 214.8 74Z" fill="#2f2f2f" stroke="#2f2f2f" stroke-width="1"/>
<path d="M216.2 62C217 68 221 73.5 230 70.5 M212 72.5C217 75.5 225 75 229.8 70.5" stroke="#2f2f2f" stroke-width="0.9"/>
<!-- sql -->
<path d="M247.5 58H258L263 63V78H247.5Z M258 58V63H263" stroke="#4a4a4a" stroke-width="1" fill="#f8f8f8"/>
<path d="M258.3 69V78C258.3 80.5 267 80.5 267 78V69" stroke="#e08a3c" stroke-width="1" fill="#f8f8f8"/>
<ellipse cx="262.65" cy="69" rx="4.35" ry="1.9" stroke="#e08a3c" stroke-width="1" fill="#f8f8f8"/>
<!-- enter data -->
<rect x="275.5" y="58.5" width="20.5" height="19.5" stroke="#4a4a4a" stroke-width="1"/>
<path d="M275.5 64H296 M275.5 71H296 M282.3 58.5V78 M289.2 58.5V78" stroke="#4a4a4a" stroke-width="0.8"/>
<rect x="274" y="56" width="10" height="9" fill="#f8f8f8" stroke="none"/>
<path d="M279.5 56V66 M274.5 61H284.5" stroke="#2f9a5a" stroke-width="1.2"/>
<!-- dataverse -->
<g transform="rotate(-28 322 67.5)" stroke="#3b3b3b">
<ellipse cx="322" cy="67.5" rx="11" ry="6.8" stroke-width="1"/>
<ellipse cx="322" cy="67.5" rx="7" ry="4.8" stroke-width="1"/>
<ellipse cx="322" cy="67.5" rx="3.4" ry="2.8" stroke-width="1"/>
</g>
<!-- recent sources -->
<path d="M356 58H366.5L371.5 63V68 M364 78H356V58 M366.5 58V63H371.5" stroke="#4a4a4a" stroke-width="1"/>
<circle cx="370.3" cy="74" r="5" stroke="#2b88d8" stroke-width="1.1" fill="#f8f8f8"/>
<path d="M370.3 71V74.3H373" stroke="#2b88d8" stroke-width="1"/>
<!-- transform data -->
<rect x="409.3" y="58" width="20" height="20" stroke="#4a4a4a" stroke-width="1"/>
<path d="M409.3 61H429.3 M409.3 66.7H429.3 M409.3 72.4H429.3 M416 61V78 M422.6 61V78" stroke="#4a4a4a" stroke-width="0.8"/>
<path d="M428 64L431.5 67.5L419.5 79L415.5 80L416.5 76Z" fill="#f8f8f8" stroke="#2b7cd3" stroke-width="1.1"/>
<!-- refresh -->
<path d="M448.5 58H459L464 63V67 M456 78H448.5V58 M459 58V63H464" stroke="#4a4a4a" stroke-width="1"/>
<path d="M458.5 73.5C459 70 464 68.5 466.5 71.5 M467 69V72H464 M467.5 75C467 78.5 462 80 459.5 77 M459 79.5V76.5H462" stroke="#2f9a5a" stroke-width="1.1"/>
<!-- new visual -->
<rect x="490.5" y="66" width="6" height="12" fill="#3d8fdc" stroke="#2b7cd3" stroke-width="0.8"/>
<rect x="496.5" y="58" width="6.3" height="20" fill="#f8f8f8" stroke="#3b3b3b" stroke-width="1"/>
<rect x="502.8" y="61.5" width="6" height="16.5" fill="#bdbdbd" stroke="#9a9a9a" stroke-width="0.6"/>
<path d="M506.5 69V79.5 M501.5 74.3H511.5" stroke="#2f9a5a" stroke-width="1.2"/>
<!-- text box -->
<rect x="519.5" y="59.5" width="22" height="17" stroke="#3b3b3b" stroke-width="1"/>
<g fill="#2b88d8" stroke="none"><circle cx="519.5" cy="59.5" r="1.1"/><circle cx="541.5" cy="59.5" r="1.1"/><circle cx="519.5" cy="76.5" r="1.1"/><circle cx="541.5" cy="76.5" r="1.1"/></g>
<path d="M526.3 73.5L530.5 62.5L534.7 73.5 M527.8 69.8H533.2" stroke="#2b88d8" stroke-width="1.1"/>
<!-- more visuals -->
<path d="M554.8 78V66.5H560.5V58H566.5V78Z M560.5 66.5V78 M566.5 62H572.5V66" stroke="#3b3b3b" stroke-width="1"/>
<path d="M573 64L576 67L566 77.5L562 78.5L563 75Z" fill="#f8f8f8" stroke="#2b7cd3" stroke-width="1.1"/>
<!-- new visual calc -->
<rect x="613.8" y="66.5" width="5.5" height="11.5" fill="#e2e2e2" stroke="#cfcfcf" stroke-width="0.7"/>
<rect x="619.3" y="58" width="5.5" height="20" fill="#ededed" stroke="#cfcfcf" stroke-width="0.7"/>
<rect x="625" y="60.5" width="5" height="6" fill="#cfe2f5" stroke="none"/>
<text x="625" y="77.5" font-family="Liberation Serif" font-style="italic" font-size="11" fill="#bdbdbd" stroke="none">fx</text>
<!-- new measure -->
<rect x="662.5" y="58" width="13" height="20" stroke="#3b3b3b" stroke-width="1" fill="#f8f8f8"/>
<rect x="664.7" y="60.3" width="8.6" height="3.2" fill="#6aa9e4" stroke="#2b7cd3" stroke-width="0.6"/>
<g fill="#2f2f2f" stroke="none"><rect x="664.5" y="66" width="2.2" height="2.2"/><rect x="667.9" y="66" width="2.2" height="2.2"/><rect x="671.3" y="66" width="2.2" height="2.2"/><rect x="664.5" y="69.8" width="2.2" height="2.2"/><rect x="667.9" y="69.8" width="2.2" height="2.2"/><rect x="671.3" y="69.8" width="2.2" height="2.2"/><rect x="664.5" y="73.6" width="2.2" height="2.2"/><rect x="667.9" y="73.6" width="2.2" height="2.2"/><rect x="671.3" y="73.6" width="2.2" height="2.2"/></g>
<!-- quick measure -->
<rect x="698.5" y="58" width="13.5" height="20" stroke="#3b3b3b" stroke-width="1" fill="#f8f8f8"/>
<rect x="703" y="60.3" width="7" height="3" fill="#c8c8c8" stroke="#777" stroke-width="0.5"/>
<g fill="#2f2f2f" stroke="none"><rect x="700.7" y="66" width="2.2" height="2.2"/><rect x="704.1" y="66" width="2.2" height="2.2"/><rect x="707.5" y="66" width="2.2" height="2.2"/><rect x="700.7" y="69.8" width="2.2" height="2.2"/><rect x="704.1" y="69.8" width="2.2" height="2.2"/><rect x="707.5" y="69.8" width="2.2" height="2.2"/><rect x="700.7" y="73.6" width="2.2" height="2.2"/><rect x="704.1" y="73.6" width="2.2" height="2.2"/><rect x="707.5" y="73.6" width="2.2" height="2.2"/></g>
<path d="M698.5 56L703.5 56L701 61.5H704.5L696 71L698 64H694.5Z" fill="#f7a83a" stroke="#e08a1e" stroke-width="0.6"/>
<!-- sensitivity -->
<path d="M758 57.8H750.5V78.5H765.7V67" stroke="#a9d3f0" stroke-width="0.9" stroke-dasharray="1.4 0.9"/>
<path d="M753 66L755.5 63.5L763.5 71L761 73.5Z" stroke="#a9d3f0" stroke-width="0.8" fill="#dcecf8"/>
<path d="M759 60L761.5 57.5L768 63.5L765.5 66.5Z" stroke="#a9d3f0" stroke-width="0.8" fill="#fbfbfb"/>
<path d="M764 57.5L766.5 55.5L770.5 59.5L768 61.5Z" stroke="#a9d3f0" stroke-width="0.8" fill="#fbfbfb"/>
<!-- publish -->
<path d="M808.6 64V59.2C808.6 58.3 809.3 57.7 810.2 57.7H814.1C815 57.7 815.7 58.3 815.7 59.2V66.5" stroke="#4a4a4a" stroke-width="1"/>
<path d="M804.5 69.7V65.3C804.5 64.4 805.2 63.8 806.1 63.8H811C811.9 63.8 812.6 64.4 812.6 65.3V78.5" stroke="#4a4a4a" stroke-width="1"/>
<rect x="800.4" y="69.7" width="8.3" height="8.8" rx="1.5" stroke="#4a4a4a" stroke-width="1"/>
<path d="M808.7 78.5H814" stroke="#4a4a4a" stroke-width="1"/>
<path d="M815.7 79.3V69 M811.5 73.2L815.7 68.9L820.2 73.2" stroke="#3a96e0" stroke-width="1.1"/>
<!-- prep data for AI -->
<path d="M865 60.8H856.3V66H872" stroke="#2f2f2f" stroke-width="1"/>
<rect x="856.3" y="69.6" width="16.2" height="5.8" stroke="#2f2f2f" stroke-width="1"/>
<rect x="858.3" y="62.6" width="2.2" height="1.8" fill="#2f2f2f" stroke="none"/><rect x="868" y="71.7" width="2.2" height="1.8" fill="#2f2f2f" stroke="none"/>
<path d="M868.5 57L869.8 60.2L873 61.5L869.8 62.8L868.5 66L867.2 62.8L864 61.5L867.2 60.2Z" stroke="#2b88d8" stroke-width="0.8" fill="#f8f8f8"/>
<path d="M873.5 64.3L874.2 66L876 66.7L874.2 67.4L873.5 69.2L872.8 67.4L871 66.7L872.8 66Z" stroke="#2b88d8" stroke-width="0.6"/>
<!-- copilot -->
<path d="M896 71.5L898.3 60.5C898.8 58.8 899.8 58 901.3 58H911.5C913.2 58 914 59.5 914 62L907 63L904.7 72C904.2 73.6 903 74.5 901.3 74.5H898C896.5 74.5 895.7 73.3 896 71.5Z" fill="url(#cpL)"/>
<path d="M910.5 63H916.5C918.3 63 919.3 64.5 918.9 66.5L916.8 74.5C916.3 76.5 915.2 77.7 913.5 77.7H904.5C903 77.7 902.2 76.5 902.2 74.5L908.2 73.8L909.5 66.5C909.7 65 910 64 910.5 63Z" fill="url(#cpR)"/>
<path d="M902.2 74.3L908.3 73.7L907.5 77.7H904.5C903 77.7 902.2 76.3 902.2 74.3Z" fill="#e8443a"/>
<path d="M907 58H911.5C913.2 58 914 59.5 914 62L909 62.7Z" fill="#2858c8"/>
</svg>

<!-- left rail -->
<div class="a" style="left:0;top:120px;width:31px;height:401px;background:#f2f1f0"></div>
<div class="a" style="left:0;top:120px;width:2.5px;height:29px;background:#117865"></div>
<svg class="a" style="left:0;top:120px" width="31" height="150" viewBox="0 120 31 150" fill="none" stroke="#3a3a3a" stroke-width="1">
<path d="M10.5 129V140H21.5 M13.3 138V132.5H15.3V138 M16.8 138V134.5H18.3V138 M19.8 138V130H21.3V138"/>
<rect x="9.5" y="159" width="12.5" height="11"/><path d="M9.5 162.7H22M9.5 166.3H22M13.7 159V170M17.8 159V170" stroke-width="0.8"/>
<path d="M9.2 191.5H14.7V197.5H9.2Z M17 188.3H22.5V192H17Z M17 197H22.5V200.7H17Z M14.7 194.5H17M15.8 190.2V198.8M15.8 190.2H17M15.8 198.8H17" stroke-width="0.9"/>
<path d="M19.5 228V223L16 219.5H11.5V225 M16 219.5V223H19.5" stroke-width="0.9"/>
<path d="M19.5 258V253L16 249.5H11.5V255 M16 249.5V253H19.5" stroke-width="0.9"/>
</svg>
<div class="t b" style="left:7.5px;top:227px;font-size:4.6px;color:#3a3a3a;letter-spacing:0.1px">DAX/</div>
<div class="t b" style="left:8px;top:257px;font-size:4.6px;color:#3a3a3a">TMDL</div>
<!-- filters pane -->
<div class="a" style="left:729px;top:120px;width:24.5px;height:375px;background:#333"></div>
<svg class="a" style="left:729px;top:120px" width="24" height="60" viewBox="729 120 24 60" fill="none" stroke="#fff">
<path d="M741 129.8L736.8 134.2L741 138.6 M746 129.8L741.8 134.2L746 138.6" stroke-width="1.2"/>
<path d="M747.3 151.5V159.7L742 156.7H738.7V154.5H742Z" stroke-width="1.1"/>
</svg>
<div class="t w b" style="left:741.3px;top:182.6px;font-size:10.3px;transform:translate(-50%,-50%) rotate(90deg);letter-spacing:0px">Filters</div>
<!-- viz pane -->
<div class="a" style="left:753.5px;top:120px;width:135px;height:401px;background:#f3f2f1"></div>
<div class="a" style="left:888.7px;top:120px;width:1px;height:401px;background:#e2e2e2"></div>
<div class="a" style="left:889.5px;top:120px;width:134.5px;height:401px;background:#f3f2f1"></div>
<div class="t" style="transform:scaleX(1.023);transform-origin:left center;left:760.4px;top:129px;font-size:11.8px;color:#2a2a2a;-webkit-text-stroke:0.45px #2a2a2a">Visualizations</div>
<svg class="a" style="left:873px;top:130px" width="11" height="9" viewBox="0 0 11 9"><path d="M1 0.7L5 4.5L1 8.3M5.5 0.7L9.5 4.5L5.5 8.3" fill="none" stroke="#333" stroke-width="1"/></svg>
<div class="t" style="transform:scaleX(0.962);transform-origin:left center;left:760.4px;top:149px;font-size:9.4px;color:#2a2a2a;-webkit-text-stroke:0.4px #2a2a2a">Build visual</div>
<div class="a" style="left:760.4px;top:163px;width:23px;height:23px;background:#d9d7d5;border-radius:1.5px"></div>
<div class="a" style="left:763px;top:165.5px;width:14px;height:1.2px;background:#777"></div>
<div class="a" style="left:763px;top:169.5px;width:18.3px;height:6px;background:#117865;border:0.6px dotted #222"></div>
<div class="a" style="left:763px;top:177.3px;width:18.3px;height:6px;background:#117865;border:0.6px dotted #222"></div>
<svg class="a" style="left:811px;top:164px" width="22" height="22" viewBox="811 164 22 22" fill="none" stroke="#333" stroke-width="1"><path d="M815.8 183.5H813.3C812.7 183.5 812.3 183.1 812.3 182.5V167.1C812.3 166.5 812.7 166.1 813.3 166.1H820.3L825.7 171.6V173 M820.3 166.1V171.6H825.7"/><path d="M830.3 172L823.6 180.2C822.3 182.6 819.5 183.3 817 182.7C819 181.8 819.3 179.8 821.6 178.6Z" fill="#f3f2f1" stroke-width="0.9"/></svg>
<svg class="a" style="left:753.5px;top:189px" width="135" height="9" viewBox="753.5 189 135 9"><path d="M753.5 196H766L771.7 190.4L777.4 196H888.5" fill="none" stroke="#c4c4c4" stroke-width="1.2"/></svg>
<svg class="a" style="left:753px;top:198px" width="136" height="220" viewBox="753 198 136 220">
<g transform="translate(761.6 204.3)"><path d="M1 0.5V13H13.5" stroke="#3b3b3b" stroke-width="0.9" fill="none"/><rect x="1.5" y="1.5" width="7" height="3" fill="#fff" stroke="#3b3b3b" stroke-width="0.6"/><rect x="4.5" y="1.5" width="4" height="3" fill="#3b8ede"/><rect x="1.5" y="7" width="10.5" height="3.3" fill="#fff" stroke="#3b3b3b" stroke-width="0.6"/><rect x="5" y="7" width="7" height="3.3" fill="#c4c4c4"/></g>
<g transform="translate(782.8 204.3)"><path d="M1 0.5V13H13.5" stroke="#3b3b3b" stroke-width="0.9" fill="none"/><rect x="3" y="3.5" width="3" height="9.5" fill="#fff" stroke="#3b3b3b" stroke-width="0.6"/><rect x="3" y="3.5" width="3" height="5.5" fill="#3b8ede"/><rect x="8.5" y="1.5" width="3" height="11.5" fill="#fff" stroke="#3b3b3b" stroke-width="0.6"/><rect x="8.5" y="1.5" width="3" height="7" fill="#c4c4c4"/></g>
<g transform="translate(803.7 204.3)"><path d="M1 0.5V13H13.5" stroke="#3b3b3b" stroke-width="0.9" fill="none"/><rect x="1.5" y="0.5" width="12" height="2.6" fill="#3b8ede"/><rect x="1.5" y="3.6" width="9" height="2.2" fill="#fff" stroke="#3b3b3b" stroke-width="0.6"/><rect x="1.5" y="6.8" width="8" height="2.4" fill="#c4c4c4" stroke="#3b3b3b" stroke-width="0.6"/><rect x="1.5" y="9.8" width="11" height="2.2" fill="#888"/></g>
<g transform="translate(824.9 204.3)"><path d="M1 0.5V13H13.5" stroke="#3b3b3b" stroke-width="0.9" fill="none"/><rect x="1.5" y="0.5" width="3.4" height="12.5" fill="#3b8ede" stroke="#3b3b3b" stroke-width="0.6"/><rect x="5.5" y="6" width="2.8" height="7" fill="#c4c4c4" stroke="#3b3b3b" stroke-width="0.6"/><rect x="9.5" y="3.5" width="3" height="9.5" fill="#fff" stroke="#3b3b3b" stroke-width="0.6"/><rect x="9.5" y="6" width="3" height="7" fill="#c4c4c4"/></g>
<g transform="translate(845.6 204.3)"><path d="M1 0.5V13H13.5" stroke="#3b3b3b" stroke-width="0.9" fill="none"/><rect x="1.5" y="1.5" width="11" height="3.2" fill="#fff" stroke="#3b3b3b" stroke-width="0.6"/><rect x="3.5" y="1.5" width="9" height="3.2" fill="#3b8ede"/><rect x="1.5" y="7.2" width="11" height="3.2" fill="#fff" stroke="#3b3b3b" stroke-width="0.6"/><rect x="6.5" y="7.2" width="6" height="3.2" fill="#c4c4c4"/></g>
<g transform="translate(866.8 204.3)"><path d="M1 0.5V13H13.5" stroke="#3b3b3b" stroke-width="0.9" fill="none"/><rect x="3" y="1" width="3.3" height="12" fill="#fff" stroke="#3b3b3b" stroke-width="0.6"/><rect x="3" y="1" width="3.3" height="9" fill="#3b8ede"/><rect x="8.8" y="1" width="3.3" height="12" fill="#fff" stroke="#3b3b3b" stroke-width="0.6"/><rect x="8.8" y="1" width="3.3" height="8" fill="#c4c4c4"/></g>
<g transform="translate(761.6 225.0)"><path d="M1 0.5V13H13.5" stroke="#3b3b3b" stroke-width="0.9" fill="none"/><path d="M1.5 10.5L5.5 5L8.5 8L13 3.5" stroke="#3b3b3b" stroke-width="0.9" fill="none"/><path d="M1.5 8L5 4.5L8 7.5L10.5 4L13.5 6.5" stroke="#3b8ede" stroke-width="1" fill="none"/></g>
<g transform="translate(782.8 225.0)"><path d="M7 13L10.8 1L13.8 13Z" fill="#c4c4c4" stroke="#999" stroke-width="0.4"/><path d="M0.5 13L5.5 1.5L9 7.5L11 5L14 13Z" fill="#3b8ede"/><path d="M2.5 8.5L5.3 3L7.5 6.5L4 10.5Z" fill="#fff"/></g>
<g transform="translate(803.7 225.0)"><path d="M1 0.5V13H13.5" stroke="#3b3b3b" stroke-width="0.9" fill="none"/><path d="M1.5 3L5.5 7.5L9.5 2L13.5 5V10L9.5 7L5.5 11.5L1.5 7.5Z" fill="#3b8ede"/></g>
<g transform="translate(824.9 225.0)"><path d="M1 0.5V13H13.5" stroke="#3b3b3b" stroke-width="0.9" fill="none"/><rect x="1.5" y="1" width="12" height="11.5" fill="#fff"/><path d="M1.5 1H13.5V7L10 10L7 6.5L1.5 9.5Z" fill="#3b8ede"/></g>
<g transform="translate(845.6 225.0)"><path d="M1 0.5V13H13.5" stroke="#3b3b3b" stroke-width="0.9" fill="none"/><rect x="3" y="1.5" width="3.2" height="11.5" fill="#3b8ede"/><rect x="8.5" y="2.5" width="3" height="10.5" fill="#fff" stroke="#3b3b3b" stroke-width="0.6"/><rect x="8.5" y="6" width="3" height="7" fill="#c4c4c4"/><path d="M1.5 10L5 6.5L8 10.5L13.5 4" stroke="#3b3b3b" stroke-width="1" fill="none"/></g>
<g transform="translate(866.8 225.0)"><path d="M1 0.5V13H13.5" stroke="#3b3b3b" stroke-width="0.9" fill="none"/><rect x="2.5" y="5.5" width="3" height="7.5" fill="#3b8ede"/><rect x="6" y="1" width="3" height="12" fill="#fff" stroke="#3b3b3b" stroke-width="0.6"/><rect x="9.5" y="4" width="3" height="9" fill="#c4c4c4"/><path d="M1.5 10.5L5.5 6L8.5 9L13.5 3.5" stroke="#3b3b3b" stroke-width="1" fill="none"/></g>
<g transform="translate(761.6 246.2)"><path d="M1 0.5V13H13.5" stroke="#3b3b3b" stroke-width="0.9" fill="none"/><path d="M1.5 3L5 3.5L7.5 6.5L10.5 2L13.5 2.5V7L10.5 6.5L7.5 10L5 7.5L1.5 7Z" fill="#3b8ede"/><path d="M1.5 7L5 7.5L7.5 10L10.5 6.5L13.5 7V12.5H1.5Z" fill="#e8962e"/><path d="M1.5 10L4.5 10L7.5 12.5L1.5 12.5Z M13.5 9.5L11 10L8 12.5H13.5Z" fill="#3b8ede"/></g>
<g transform="translate(782.8 246.2)"><path d="M1 0.5V13H13.5" stroke="#3b3b3b" stroke-width="0.9" fill="none"/><rect x="2.5" y="4" width="2.5" height="9" fill="#c4c4c4" stroke="#3b3b3b" stroke-width="0.6"/><rect x="5" y="6" width="2.3" height="7" fill="#fff" stroke="#3b3b3b" stroke-width="0.6"/><rect x="7.3" y="1.5" width="2.5" height="6" fill="#3b8ede"/><rect x="10.5" y="1.5" width="2.5" height="11.5" fill="#c4c4c4" stroke="#3b3b3b" stroke-width="0.6"/></g>
<g transform="translate(803.7 246.2)"><rect x="0.5" y="1" width="13" height="3.8" fill="#3b8ede"/><rect x="2.5" y="5.5" width="9" height="3.2" fill="#8cc0ee" stroke="#3b8ede" stroke-width="0.6"/><rect x="4.8" y="9.5" width="4.4" height="3.5" fill="#3b8ede"/></g>
<g transform="translate(824.9 246.2)"><path d="M1 0.5V13H13.5" stroke="#3b3b3b" stroke-width="0.9" fill="none"/><circle cx="4" cy="3.8" r="1" fill="#8cc0ee"/><circle cx="8" cy="5.5" r="1" fill="#8cc0ee"/><circle cx="11.5" cy="9" r="1.1" fill="#8cc0ee"/><circle cx="7.8" cy="8.2" r="0.8" fill="#3b8ede"/><rect x="10.8" y="1" width="1.8" height="1.8" fill="#222"/><rect x="3.6" y="9" width="1.8" height="1.8" fill="#222"/></g>
<g transform="translate(845.6 246.2)"><circle cx="7" cy="7" r="6.3" fill="#fff" stroke="#3b3b3b" stroke-width="0.9"/><path d="M7 7V0.7A6.3 6.3 0 0 1 12.8 9.5Z" fill="#3b8ede"/></g>
<g transform="translate(866.8 246.2)"><circle cx="7" cy="7" r="4.8" fill="none" stroke="#3b8ede" stroke-width="3"/><path d="M7 2.2A4.8 4.8 0 0 0 2.4 5.6" fill="none" stroke="#fff" stroke-width="2.2"/><path d="M7 0.8A6.2 6.2 0 0 0 1 5.3 M7 3.7A3.3 3.3 0 0 0 3.8 6" fill="none" stroke="#3b8ede" stroke-width="0.6"/></g>
<g transform="translate(761.6 267.1)"><rect x="0.5" y="0.5" width="13" height="13" fill="#fff" stroke="#3b3b3b" stroke-width="0.8"/><rect x="0.5" y="0.5" width="6.5" height="6" fill="#8cc0ee" stroke="#3b8ede" stroke-width="0.6"/><rect x="0.5" y="6.5" width="6.5" height="7" fill="#3b8ede"/><path d="M7 4.5H13.5M10 4.5V13.5M10 9H13.5" stroke="#3b3b3b" stroke-width="0.7" fill="none"/></g>
<g transform="translate(782.8 267.1)"><circle cx="7.3" cy="6" r="4.8" fill="#ddd" stroke="#444" stroke-width="1.1"/><path d="M5.5 4L8.5 3.3L9.5 6L7.5 8.5L5.5 7Z" fill="#2fa84f"/><path d="M3 2C0.5 5 1.5 10 5.5 11.5 M4 13.2H11 M7.3 11V13" stroke="#444" stroke-width="1" fill="none"/></g>
<g transform="translate(803.7 267.1)"><path d="M0.8 1.5L4 2.5L7 1L10 2L13.5 1V7L11.5 11L8 13.5L4.5 12L2 8.5Z" fill="#c4c4c4" stroke="#777" stroke-width="0.5"/><path d="M0.8 1.5L4 2.5L6 1.5L7 6L3 9.5L2 8.5Z" fill="#3b8ede"/><path d="M6.5 9.5L11 7.5L12 9.5L8.5 13L6 12Z" fill="#3b8ede"/></g>
<g transform="translate(824.9 267.1)"><path d="M7.5 0.3L13 13.8L7.5 10L1.5 13.5Z" fill="#3b8ede"/></g>
<g transform="translate(845.6 267.1)"><path d="M1.5 10.5A5.8 5.8 0 0 1 12.8 9.5" fill="none" stroke="#3b8ede" stroke-width="2.4"/><path d="M1.5 10.5A5.8 5.8 0 0 1 5.5 4.6" fill="none" stroke="#333" stroke-width="2.4"/><path d="M7 10.5L9.5 6.8" stroke="#333" stroke-width="0.9"/></g>
<g transform="translate(866.8 267.1)"><rect x="0.5" y="2" width="13" height="10" fill="#fff" stroke="#3b3b3b" stroke-width="0.9"/><text x="7" y="9" font-family="Liberation Sans" font-size="5.8" font-weight="bold" fill="#3b8ede" text-anchor="middle">123</text><path d="M2.5 10.3H11.5" stroke="#3b8ede" stroke-width="0.5"/></g>
<g transform="translate(761.6 288.2)"><rect x="0.5" y="1.5" width="13" height="11" fill="#fff" stroke="#3b3b3b" stroke-width="0.9"/><path d="M2.5 4H9M2.5 9H9" stroke="#3b8ede" stroke-width="1.3"/><path d="M2.5 6H11M2.5 11H11" stroke="#999" stroke-width="0.6"/></g>
<g transform="translate(782.8 288.2)"><rect x="0.5" y="2" width="13" height="10" fill="#eee" stroke="#3b3b3b" stroke-width="0.9"/><path d="M3 8.5L5.3 4.5L7.6 8.5Z" fill="#2fa84f"/><path d="M7.4 4.5H12L9.7 8.5Z" fill="#e03a3a"/><path d="M2.5 10.3H11.5" stroke="#999" stroke-width="0.5"/></g>
<g transform="translate(803.7 288.2)"><rect x="0.5" y="1" width="12.5" height="10.5" fill="#fff" stroke="#3b3b3b" stroke-width="0.9"/><path d="M0.5 3.5H13M2.5 6H5M2.5 8.5H5" stroke="#3b3b3b" stroke-width="0.8"/><path d="M6.5 6.5H14L11.3 9.8V13.5L9.3 12.5V9.8Z" fill="#fff" stroke="#3b3b3b" stroke-width="0.9"/></g>
<g transform="translate(824.9 288.2)"><rect x="0.5" y="1.5" width="13" height="11" fill="#fff" stroke="#3b3b3b" stroke-width="0.9"/><path d="M0.5 4.5H13.5M0.5 7.2H13.5M0.5 9.9H13.5M5 1.5V12.5M9.2 1.5V12.5" stroke="#3b3b3b" stroke-width="0.7"/><rect x="0.5" y="1.5" width="13" height="1.5" fill="#777"/></g>
<g transform="translate(845.6 288.2)"><rect x="0.5" y="1.5" width="13" height="11" fill="#3b8ede" stroke="#3b3b3b" stroke-width="0.9"/><rect x="5" y="4.5" width="8.5" height="2.7" fill="#fff"/><path d="M0.5 4.5H13.5M0.5 7.2H13.5M0.5 9.9H13.5M5 1.5V12.5M9.2 1.5V12.5" stroke="#fff" stroke-width="0.6"/><rect x="0.5" y="1.5" width="13" height="1.5" fill="#555"/></g>
<g transform="translate(866.8 288.2)"><text x="7" y="11.5" font-family="Liberation Sans" font-size="12" font-weight="bold" fill="#2b7cd3" text-anchor="middle">R</text></g>
<g transform="translate(761.6 308.8)"><text x="7" y="11" font-family="Liberation Sans" font-size="11.5" font-weight="bold" fill="#2b7cd3" text-anchor="middle" textLength="15" lengthAdjust="spacingAndGlyphs">Py</text></g>
<g transform="translate(782.8 308.8)"><path d="M1 0.5V13H13.5" stroke="#3b3b3b" stroke-width="0.9" fill="none"/><path d="M1.5 4H10M1.5 7.5H6.5M1.5 10.5H8" stroke="#3b3b3b" stroke-width="0.9"/><circle cx="11.3" cy="3.5" r="1.3" fill="#fff" stroke="#3b8ede" stroke-width="0.8"/><circle cx="8" cy="7.5" r="1" fill="#3b8ede"/></g>
<g transform="translate(803.7 308.8)"><rect x="0.3" y="5.5" width="4" height="3" fill="#3b8ede"/><rect x="8" y="0.8" width="5.3" height="3" fill="#8cc0ee" stroke="#3b8ede" stroke-width="0.6"/><rect x="8" y="5.5" width="5.3" height="3" fill="#8cc0ee" stroke="#3b8ede" stroke-width="0.6"/><rect x="8" y="10.2" width="5.3" height="3" fill="#8cc0ee" stroke="#3b8ede" stroke-width="0.6"/><path d="M4.3 7H8M6.2 2.3V11.7M6.2 2.3H8M6.2 11.7H8" stroke="#3b8ede" stroke-width="0.8" fill="none"/></g>
<g transform="translate(824.9 308.8)"><path d="M0.8 1.5H13.2V9.5H6L3 12.8V9.5H0.8Z" fill="#fff" stroke="#3b8ede" stroke-width="1.1"/></g>
<g transform="translate(845.6 308.8)"><path d="M2.5 0.8H8.5L11.5 3.8V13.2H2.5Z M8.5 0.8V3.8H11.5" fill="#fff" stroke="#3b3b3b" stroke-width="0.9"/><path d="M4 6.5H8M4 8.5H9.5M4 10.5H7" stroke="#3b8ede" stroke-width="0.9"/><rect x="1.5" y="5" width="2.5" height="2.5" fill="#3b8ede"/></g>
<g transform="translate(866.8 308.8)"><path d="M3.5 1H10.5V6C10.5 10 3.5 10 3.5 6Z M7 9V11.5M4.5 12.8H9.5V11.5H4.5Z M3.5 2.5H1V4.5C1 6 2.5 6.8 3.7 6.8M10.5 2.5H13V4.5C13 6 11.5 6.8 10.3 6.8" fill="none" stroke="#333" stroke-width="1"/></g>
<g transform="translate(761.6 330.0)"><path d="M2 0.8H8.5L12 4.3V13.2H2Z M8.5 0.8V4.3H12" fill="#fff" stroke="#333" stroke-width="1"/><path d="M4.5 11.5V8.5M7 11.5V6M9.5 11.5V9.5" stroke="#333" stroke-width="1.3"/></g>
<g transform="translate(782.8 330.0)"><rect x="1.5" y="3" width="12" height="9.5" fill="#fff" stroke="#3b3b3b" stroke-width="0.8"/><text x="8" y="10.3" font-family="Liberation Sans" font-size="6" fill="#3b8ede" text-anchor="middle">123</text><path d="M2.5 0L6 0L4.3 3.5H6.5L1.5 9L2.7 5H0.5Z" fill="#f7a83a" stroke="#e0861e" stroke-width="0.4"/></g>
<g transform="translate(803.7 330.0)"><rect x="2" y="3" width="5" height="4" fill="#ddd" stroke="#999" stroke-width="0.5"/><rect x="8" y="2" width="5" height="4.5" fill="#fff" stroke="#3b3b3b" stroke-width="0.7"/><path d="M7.5 7.5H14L11.5 10.3V13.8L10 13V10.3Z" fill="#fff" stroke="#3b3b3b" stroke-width="0.8"/><rect x="2" y="8.5" width="4" height="4" fill="#ddd" stroke="#999" stroke-width="0.5"/><path d="M2.5 0L6 0L4.3 3.5H6.5L1.5 9L2.7 5H0.5Z" fill="#f7a83a" stroke="#e0861e" stroke-width="0.4"/></g>
<g transform="translate(824.9 330.0)"><rect x="1.5" y="1" width="12" height="12" fill="#fff" stroke="#3b8ede" stroke-width="1.3"/><path d="M4 11L11 3.5V8.5H8.5V11Z" fill="#8cc0ee"/><rect x="0.5" y="0" width="3.3" height="4.2" fill="#e8862e"/><circle cx="12.3" cy="10.3" r="1.5" fill="#e8862e"/><path d="M5 5L7.5 5" stroke="#3b8ede" stroke-width="1"/></g>
<g transform="translate(845.6 330.0)"><path d="M7 1L13 7L7 13L1 7Z M4 4L10 10M10 4L4 10" fill="none" stroke="#9a3fc0" stroke-width="1"/></g>
<g transform="translate(866.8 330.0)"><path d="M0.8 2H8.5L13.2 7L8.5 12H0.8L5.3 7Z" fill="none" stroke="#2b88e8" stroke-width="1"/><path d="M5.5 11L12 4.5" stroke="#2b88e8" stroke-width="0.8"/></g>
<g transform="translate(761.6 351.3)"><rect x="1" y="3.5" width="12" height="7" fill="#8cc0ee"/><path d="M1 1.5H13M1 12.8H13" stroke="#555" stroke-width="0.8" stroke-dasharray="1 0.8"/><path d="M2 4.8H12M2 7H12M2 9.2H12" stroke="#3b8ede" stroke-width="1.1" stroke-dasharray="2 0.8"/></g>
<g transform="translate(782.8 351.3)"><text x="7" y="9.8" font-family="Liberation Sans" font-size="7" font-weight="bold" fill="#9a4fd0" text-anchor="middle" textLength="14">MTA</text></g>
<g transform="translate(803.7 351.3)"><rect x="3.3" y="0.5" width="2.6" height="13" fill="#6fb7a8"/><rect x="8" y="0.5" width="2.6" height="13" fill="#8cc0ee"/><rect x="1" y="3" width="3" height="3" fill="#6fb7a8"/><rect x="1" y="8" width="3" height="3" fill="#6fb7a8"/><rect x="10" y="2" width="3" height="3.5" fill="#8cc0ee"/><rect x="10" y="8.5" width="3" height="3.5" fill="#8cc0ee"/><rect x="6.5" y="5.5" width="1.5" height="3" fill="#6fb7a8"/></g>
<g transform="translate(824.9 351.3)"><rect x="1" y="1.5" width="3.5" height="3.5" fill="#3b8ede"/><rect x="6" y="1.5" width="3" height="2.5" fill="#3b8ede"/><rect x="10" y="1.5" width="3.5" height="3.5" fill="#3b8ede"/><rect x="1.5" y="9" width="4" height="4" fill="#3b8ede"/><rect x="5.5" y="3" width="1.5" height="1" fill="#8cc0ee"/></g>
<g transform="translate(845.6 351.3)"><path d="M1 0.5V13H13.5" stroke="#3b3b3b" stroke-width="0.9" fill="none"/><path d="M1.5 12L12.5 1" stroke="#333" stroke-width="1"/><path d="M4.5 13V5" stroke="#3b8ede" stroke-width="0.9"/><path d="M4 9H13.5V13 M4 11H13.5 M8.5 9V13" stroke="#333" stroke-width="0.7" fill="none"/></g>
<g transform="translate(866.8 351.3)"><rect x="0.3" y="0.3" width="13.4" height="13.4" rx="1.5" fill="#111"/><path d="M3 7.5A4 4 0 0 1 11 7.5Z" fill="#f5b400"/><path d="M7 3V7.5M5 4.5V7.5M9 4.5V7.5" stroke="#111" stroke-width="0.6"/><rect x="2" y="9" width="10" height="3" fill="#e02020"/><path d="M4 9.5V11.5M6 9.5V11.5M8 9.5V11.5M10 9.5V11.5" stroke="#fff" stroke-width="0.7"/></g>
<g transform="translate(761.6 371.7)"><rect x="1" y="3.5" width="12.5" height="8.5" fill="#fff" stroke="#333" stroke-width="0.9"/><text x="7.5" y="10.5" font-family="Liberation Sans" font-size="7.5" font-weight="bold" fill="#222" text-anchor="middle" textLength="11" lengthAdjust="spacingAndGlyphs">KPI</text><path d="M1.5 0.5L5 0.5L3.3 4H5.5L0.8 9.5L2 5.5H0Z" fill="#f2c23a"/><path d="M1 13.3H13.5" stroke="#333" stroke-width="0.8"/></g>
<g transform="translate(782.8 371.7)"><circle cx="7.5" cy="6.3" r="5.3" fill="#f5b400" stroke="#222" stroke-width="0.8"/><path d="M7.5 1V6.3L3 9.2A5.3 5.3 0 0 1 7.5 1Z M7.5 6.3H12.8A5.3 5.3 0 0 1 10 11Z" fill="#222"/><circle cx="7.5" cy="6.3" r="1.6" fill="#f5b400" stroke="#222" stroke-width="0.5"/><path d="M2 13.2H11.5" stroke="#e0a000" stroke-width="1"/></g>
<g transform="translate(803.7 371.7)"><circle cx="3" cy="7" r="0.8" fill="#444"/><circle cx="7" cy="7" r="0.8" fill="#444"/><circle cx="11" cy="7" r="0.8" fill="#444"/></g>
<g transform="translate(762 396)"><rect x="0" y="0" width="14.5" height="14" fill="#222"/><text x="1" y="10" font-family="Liberation Sans" font-size="7" font-weight="bold" fill="#bbb" textLength="9">BC</text><path d="M11.3 5V10M8.8 7.5H13.8" stroke="#3fd070" stroke-width="1.4"/></g>
</svg>
<div class="a" style="left:757px;top:391px;width:126px;height:0;border-top:1px dashed #dcdcdc"></div>
<div class="a" style="left:753.5px;top:417.5px;width:131px;height:1px;background:#e4e4e4"></div>
<div class="t" style="transform:scaleX(0.887);transform-origin:left center;left:763px;top:425.8px;font-size:9.6px;color:#2a2a2a">Values</div>
<div class="a" style="left:756.6px;top:441.6px;width:128px;height:20px;background:#fff;border:1px dashed #cfcfcf"></div>
<div class="t" style="transform:scaleX(0.934);transform-origin:left center;left:765.6px;top:447px;font-size:9.6px;color:#2a2a2a">Add data fields here</div>
<div class="t" style="transform:scaleX(1.013);transform-origin:left center;left:763px;top:471.2px;font-size:9.6px;color:#2a2a2a">Drill through</div>
<div class="t" style="transform:scaleX(0.956);transform-origin:left center;left:762.9px;top:490.2px;font-size:9.4px;color:#2a2a2a">Cross-report</div>
<div class="a" style="left:848.4px;top:489px;width:24.3px;height:11.5px;border:1px solid #555;border-radius:6px;background:#fff"></div>
<div class="a" style="left:852.2px;top:491.8px;width:6px;height:6px;border-radius:3px;background:#555"></div>
<div class="t" style="left:859.9px;top:491.6px;font-size:6.6px;color:#333">Off</div>
<div class="a" style="left:753.5px;top:506px;width:135px;height:9px;overflow:hidden">
<div class="t" style="transform:scaleX(0.934);transform-origin:left center;left:9.4px;top:5.2px;font-size:9.4px;color:#2a2a2a">Keep all filters</div>
<div class="a" style="left:94.8px;top:3.3px;width:24.3px;height:11px;border-radius:6px;background:#117865"></div>
<div class="a" style="left:110px;top:6px;width:6px;height:6px;border-radius:3px;background:#fff"></div>
<div class="t w" style="left:99px;top:6.3px;font-size:6px">On</div>
</div>
<div class="a" style="left:884.8px;top:420.3px;width:3.6px;height:67.7px;background:#8a8a8a;border-radius:2px"></div>
<!-- data pane -->
<div class="t" style="transform:scaleX(0.963);transform-origin:left center;left:895.8px;top:129px;font-size:11.8px;color:#2a2a2a;-webkit-text-stroke:0.45px #2a2a2a">Data</div>
<svg class="a" style="left:1009px;top:130px" width="11" height="9" viewBox="0 0 11 9"><path d="M1 0.7L5 4.5L1 8.3M5.5 0.7L9.5 4.5L5.5 8.3" fill="none" stroke="#333" stroke-width="1"/></svg>
<div class="a" style="left:893px;top:154.3px;width:128px;height:16.7px;background:#fff;border:1px solid #dcdcdc;border-bottom:1px solid #8a8a8a;border-radius:2px"></div>
<svg class="a" style="left:901px;top:157px" width="12" height="12" viewBox="0 0 12 12"><circle cx="5" cy="4.8" r="3.6" fill="none" stroke="#555" stroke-width="1"/><path d="M7.6 7.5L11 11" stroke="#555" stroke-width="1.1"/></svg>
<div class="t sg" style="left:918.2px;top:158px;font-size:10px;color:#666">Search</div>
<svg class="a" style="left:900px;top:181px" width="24" height="13" viewBox="900 181 24 13" fill="none" stroke="#444"><path d="M902 182.8L906 187.2L902 191.6" stroke-width="0.9"/><rect x="911.8" y="183" width="8.8" height="8.4" rx="1" stroke-width="0.9"/><path d="M911.8 185.8H920.6M911.8 188.6H920.6M914.8 183V191.4M917.7 183V191.4" stroke-width="0.7"/></svg>
<div class="t sg" style="left:925px;top:183px;font-size:9.2px;color:#2a2a2a">Sheet1</div>
<!-- tabs -->
<div class="a" style="left:31px;top:495px;width:722.5px;height:26px;background:#f2f1f0;border-left:1px solid #e6e6e6"></div>
<svg class="a" style="left:36px;top:497px" width="90" height="22" viewBox="36 497 90 22" fill="none" stroke="#444" stroke-width="1"><rect x="40.3" y="500.7" width="13.4" height="8"/><path d="M47 508.7V511M44 511H50"/><rect x="76" y="498.8" width="9.5" height="15" rx="1.5"/><path d="M79.8 511.5H81.7"/></svg>
<div class="a" style="left:38.2px;top:515.5px;width:18.2px;height:2px;background:#117865"></div>
<svg class="a" style="left:100px;top:505px" width="22" height="8" viewBox="100 505 22 8"><path d="M104.5 506.3L101.5 508.8L104.5 511.3Z M117.5 506.3L120.5 508.8L117.5 511.3Z" fill="#c8c8c8"/></svg>
<div class="a" style="left:126.2px;top:495px;width:157.7px;height:25.5px;background:#fff"></div>
<div class="a" style="left:183.6px;top:495px;width:1px;height:25.5px;background:#ececec"></div>
<div class="a" style="left:126.2px;top:518.5px;width:57.4px;height:2px;background:#117865"></div>
<div class="t b" style="transform:scaleX(0.831);transform-origin:left center;left:142px;top:503.8px;font-size:9.6px;color:#222">Page 1</div>
<div class="t b" style="left:175.5px;top:498.5px;font-size:6.5px;color:#222">x</div>
<div class="t" style="transform:scaleX(0.928);transform-origin:left center;left:198.5px;top:503.8px;font-size:9.6px;color:#222">Recommendation</div>
<div class="a" style="left:283.9px;top:495px;width:29px;height:25.5px;background:#117865"></div>
<svg class="a" style="left:294px;top:504px" width="9" height="9" viewBox="0 0 9 9"><path d="M4.5 0.5V8.5M0.5 4.5H8.5" stroke="#fff" stroke-width="1.8"/></svg>
<!-- status -->
<div class="a" style="left:0;top:521px;width:1024px;height:18.5px;background:#f2f1f0;border-top:1px solid #e2e2e2"></div>
<div class="t" style="transform:scaleX(0.949);transform-origin:left center;left:3.3px;top:527px;font-size:9px;color:#444">Page 1 of 2</div>
<div class="t b" style="left:865.3px;top:525.5px;font-size:10px;color:#444">-</div>
<div class="a" style="left:873px;top:530.3px;width:74px;height:1px;background:#777"></div>
<div class="a" style="left:896px;top:525.8px;width:2.8px;height:9px;background:#444;border-radius:1px"></div>
<div class="a" style="left:910.3px;top:528.5px;width:1px;height:4.5px;background:#777"></div>
<div class="t" style="left:951.3px;top:525px;font-size:11px;color:#444">+</div>
<div class="t" style="transform:scaleX(0.917);transform-origin:left center;left:967.3px;top:526.6px;font-size:9.4px;color:#555">69%</div>
<svg class="a" style="left:999px;top:526px" width="12.6" height="9.6" viewBox="0 0 14 11" preserveAspectRatio="none" fill="none" stroke="#444" stroke-width="1"><rect x="0.5" y="0.5" width="12.5" height="9.5"/><path d="M2.5 4V2.5H4.5M9 2.5H11V4M11 6.5V8H9M4.5 8H2.5V6.5" stroke-width="0.8"/></svg>
<!-- taskbar -->
<div class="a" style="left:0;top:539.5px;width:1024px;height:35.5px;background:linear-gradient(90deg,#e0e3e5 0,#e4e5e6 28%,#e8e5de 50%,#e4e3dc 75%,#e1e1db 100%);border-top:1.5px solid #444"></div>
<svg class="a" style="left:0;top:540px" width="1024" height="35" viewBox="0 540 1024 35">
<defs><radialGradient id="sun"><stop offset="0" stop-color="#ffd04a"/><stop offset="1" stop-color="#f08a1e"/></radialGradient>
<linearGradient id="edge" x1="0" y1="0" x2="1" y2="1"><stop offset="0" stop-color="#35c1a1"/><stop offset="0.5" stop-color="#1b8fd6"/><stop offset="1" stop-color="#0c59a4"/></linearGradient>
<linearGradient id="cpt" x1="0" y1="0" x2="1" y2="1"><stop offset="0" stop-color="#2a9df4"/><stop offset="0.4" stop-color="#3fc08c"/><stop offset="0.6" stop-color="#f5c04a"/><stop offset="0.8" stop-color="#f0508a"/><stop offset="1" stop-color="#8a5ae0"/></linearGradient><linearGradient id="cpL2" x1="0" y1="0" x2="0" y2="1"><stop offset="0" stop-color="#1878d8"/><stop offset="0.35" stop-color="#1aa0c8"/><stop offset="0.6" stop-color="#58b858"/><stop offset="0.8" stop-color="#c8c030"/><stop offset="1" stop-color="#f0a818"/></linearGradient><linearGradient id="cpR2" x1="0" y1="0" x2="0" y2="1"><stop offset="0" stop-color="#a860e8"/><stop offset="0.45" stop-color="#e85498"/><stop offset="0.75" stop-color="#f06a6a"/><stop offset="1" stop-color="#e8924a"/></linearGradient></defs>
<circle cx="23" cy="557.5" r="7.8" fill="url(#sun)"/>
<path d="M15.5 554.5H30.5M15 557.5H31M15.5 560.5H30.5" stroke="#f8e0a0" stroke-width="1" opacity="0.9"/>
<!-- windows -->
<g><rect x="271.2" y="549.2" width="8.5" height="8.4" fill="#2eaee8"/><rect x="280.6" y="549.2" width="8.5" height="8.4" fill="#1a8ee0"/><rect x="271.2" y="558.4" width="8.5" height="8.4" fill="#1288dc"/><rect x="280.6" y="558.4" width="8.5" height="8.4" fill="#0a78d0"/></g>
<!-- search pill -->
<rect x="299" y="546.6" width="163.5" height="22.6" rx="11.3" fill="#f7f7f7" stroke="#dedede" stroke-width="0.6"/>
<circle cx="311.8" cy="556.5" r="3.7" fill="none" stroke="#222" stroke-width="1.3"/><path d="M314.5 559.3L317.5 562.3" stroke="#222" stroke-width="1.4"/>
<!-- task view -->
<rect x="477" y="549.8" width="12.3" height="11.5" rx="1" fill="#f4f4f4" stroke="#bbb" stroke-width="0.5"/><rect x="472.6" y="554" width="12.3" height="11.8" rx="1" fill="#222"/><rect x="477.5" y="554.5" width="7" height="6" fill="#888" opacity="0.6"/>
<!-- edge -->
<circle cx="515" cy="558" r="9" fill="url(#edge)"/><path d="M509 560C509 555 513 552.5 517 553.5C521 554.5 522 558 519 560H514C514 563 517 565 521 564C518 567.5 509 566 509 560Z" fill="#fff" opacity="0.35"/>
<rect x="506.5" y="559.5" width="9.5" height="7" rx="1" fill="#c87820"/><rect x="509.5" y="558" width="3.5" height="2" fill="none" stroke="#8a4a10" stroke-width="0.7"/><rect x="506.5" y="562" width="9.5" height="1.2" fill="#8a4a10"/><rect x="512.5" y="570.5" width="3.5" height="1.8" rx="0.9" fill="#888"/>
<!-- explorer -->
<path d="M537.5 551H545L547 553H556.5V555H537.5Z" fill="#e0a020"/><rect x="537.5" y="554" width="19.5" height="12.5" rx="1" fill="#f7c948"/><rect x="540" y="561" width="14" height="5.5" fill="#4aa8e8"/><rect x="537.5" y="563" width="19.5" height="3.5" fill="#f0b830"/>
<!-- copilot -->
<g transform="translate(580.3 558) scale(0.82) translate(-907.5 -68)">
<path d="M896 71.5L898.3 60.5C898.8 58.8 899.8 58 901.3 58H911.5C913.2 58 914 59.5 914 62L907 63L904.7 72C904.2 73.6 903 74.5 901.3 74.5H898C896.5 74.5 895.7 73.3 896 71.5Z" fill="url(#cpL2)"/>
<path d="M910.5 63H916.5C918.3 63 919.3 64.5 918.9 66.5L916.8 74.5C916.3 76.5 915.2 77.7 913.5 77.7H904.5C903 77.7 902.2 76.5 902.2 74.5L908.2 73.8L909.5 66.5C909.7 65 910 64 910.5 63Z" fill="url(#cpR2)"/>
<path d="M902.2 74.3L908.3 73.7L907.5 77.7H904.5C903 77.7 902.2 76.3 902.2 74.3Z" fill="#e8443a"/>
</g>
<!-- store -->
<rect x="605" y="553" width="16.5" height="13.5" rx="1.5" fill="#2456a8"/><path d="M609.5 553V550.5H617V553" fill="none" stroke="#2456a8" stroke-width="1.2"/><rect x="609.8" y="556" width="3" height="3" fill="#f25022"/><rect x="613.7" y="556" width="3" height="3" fill="#7fba00"/><rect x="609.8" y="559.9" width="3" height="3" fill="#00a4ef"/><rect x="613.7" y="559.9" width="3" height="3" fill="#ffb900"/>
<!-- wps -->
<rect x="637.3" y="549" width="18.5" height="18" rx="2.5" fill="#e8232d"/><path d="M640.3 554L643 562.5L645.8 556L648.6 562.5L650.3 557.5" fill="none" stroke="#fff" stroke-width="1.7"/><path d="M649.5 554H654L651 559Z" fill="#fff"/>
<!-- whatsapp -->
<circle cx="679" cy="559" r="8.7" fill="#2bb741"/><path d="M671.5 567.5L673 563L676 565.5Z" fill="#2bb741"/><circle cx="679" cy="559" r="6.3" fill="none" stroke="#fff" stroke-width="1.1"/><path d="M676.2 556C676.2 559.5 678.5 561.8 682 562L682.8 560.2L681 559.2L680 560C678.8 559.5 678.2 558.8 677.8 557.8L678.7 557L677.8 555.2Z" fill="#fff"/>
<circle cx="686.8" cy="550.8" r="5.3" fill="#1a73d8"/><text x="686.8" y="553.6" font-family="Liberation Sans" font-size="7.8" fill="#fff" text-anchor="middle">6</text>
<!-- red app -->
<rect x="704.5" y="549.5" width="17.5" height="17.5" rx="2" fill="#ef443b"/><path d="M711 554.5L714.5 558.2L711 562Z M708 556.5L709.8 558.2L708 560Z" fill="#fff"/><path d="M715 555L718.2 558.2L715 561.5L711.8 558.2Z" fill="#fff"/>
<!-- power bi -->
<rect x="732" y="543.5" width="27.5" height="29" rx="3" fill="#f6f6f4" stroke="#e0e0dc" stroke-width="0.6"/>
<rect x="738" y="549" width="16.5" height="17.5" rx="1.5" fill="#2c6fb0"/><rect x="738" y="549" width="6" height="17.5" fill="#f2c811"/><rect x="744" y="553" width="5" height="13.5" fill="#e8b010"/><rect x="749" y="557.5" width="4.5" height="9" fill="#d09a08"/>
<rect x="741" y="570.3" width="10.5" height="2" rx="1" fill="#1a73d8"/>
<rect x="677.5" y="570.5" width="3.5" height="1.8" rx="0.9" fill="#888"/><rect x="711.5" y="570.5" width="3.5" height="1.8" rx="0.9" fill="#888"/>
<!-- tray -->
<g fill="none" stroke="#222" stroke-width="1.1">
<path d="M867.5 560L871.3 556.2L875 560"/>
<path d="M890 561.5H899.5C902.5 561.5 902.5 557 899.5 557C899.5 553 893.5 552.5 892.5 556C889 556 888.5 561.5 890.5 561.5M889.5 553L901 563.5"/>
<g transform="translate(1840.5 0) scale(-1 1)"><path d="M914.5 558H918.5L921.5 553.5L922.8 554L921.5 558H925L926 556.8L927 557.2L926.3 558.8L927 560.4L926 560.8L925 559.6H921.5L922.8 563.6L921.5 564L918.5 559.6H914.5Z" stroke-width="0.9"/></g>
<path d="M932 556.5H934L937 553.8V563.8L934 561H932Z M939 556.3C940 557.5 940 560 939 561.3 M941 554.8C942.8 557 942.8 560.5 941 562.8" stroke-width="0.9"/>
<rect x="950" y="554.5" width="10.5" height="7.5" rx="1" fill="#222" stroke="#222"/><path d="M961.5 557V559.5 M950.5 553L953 551" stroke-width="0.9"/>
</g>
</svg>
<div class="t" style="transform:scaleX(0.982);transform-origin:left center;left:37.5px;top:547.3px;font-size:8.8px;color:#111">27°C</div>
<div class="t" style="transform:scaleX(1.015);transform-origin:left center;left:37.5px;top:559.3px;font-size:8.8px;color:#555">Smoke</div>
<div class="t" style="transform:scaleX(0.963);transform-origin:left center;left:326.3px;top:553px;font-size:10px;color:#555">Search</div>
<div class="t r" style="transform:scaleX(0.999);transform-origin:right center;left:949.5px;width:60px;top:547.3px;font-size:9px;color:#111">7:43 AM</div>
<div class="t r" style="transform:scaleX(1.041);transform-origin:right center;left:949.5px;width:60px;top:559.3px;font-size:9px;color:#111">9/6/2025</div>

</body></html>
